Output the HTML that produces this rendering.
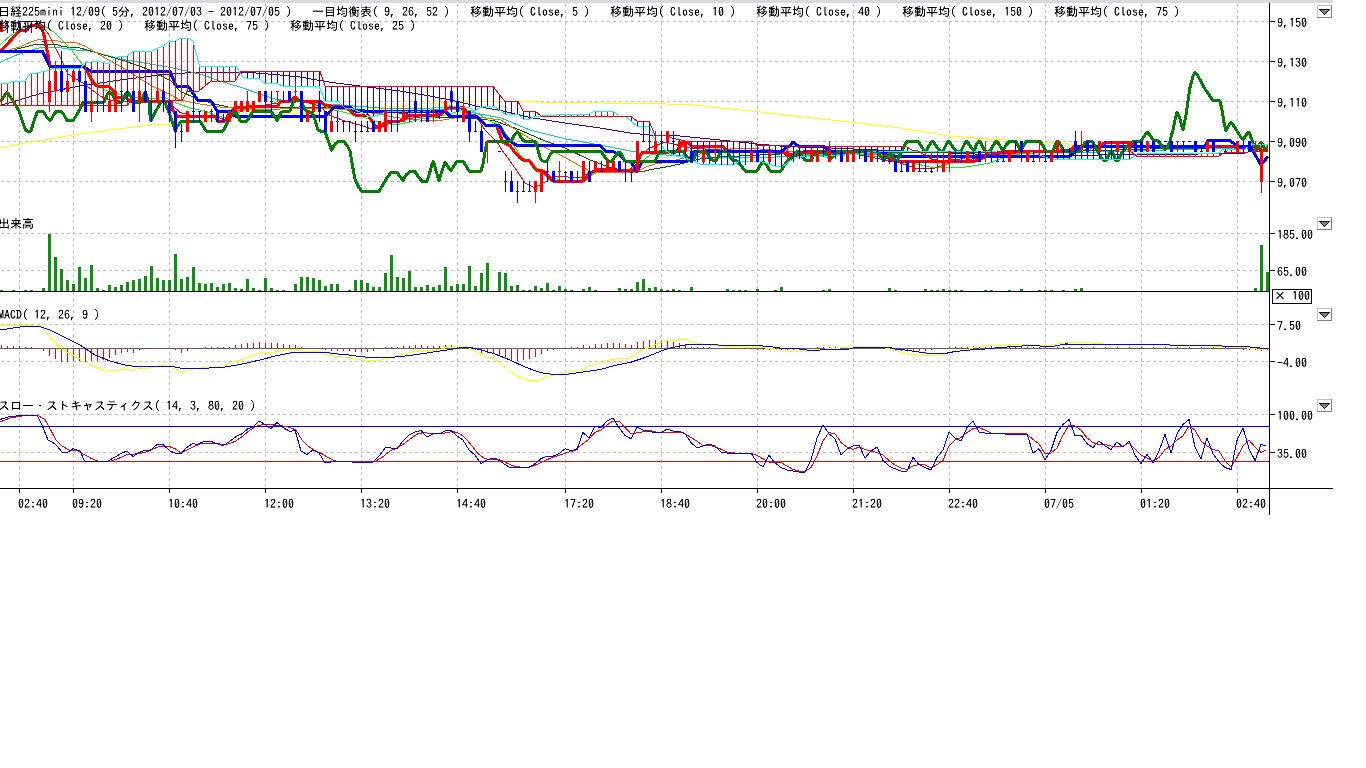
<!DOCTYPE html>
<html lang="ja"><head><meta charset="utf-8"><title>日経225mini チャート</title>
<style>html,body{margin:0;padding:0;background:#fff;overflow:hidden}svg{display:block}</style>
</head><body>
<svg width="1366" height="768" viewBox="0 0 1366 768" shape-rendering="crispEdges">
<defs><filter id="crisp" x="0" y="0" width="100%" height="100%" filterUnits="userSpaceOnUse" color-interpolation-filters="sRGB"><feComponentTransfer><feFuncA type="linear" slope="1.45" intercept="-0.12"/></feComponentTransfer></filter></defs>
<rect x="0" y="0" width="1366" height="768" fill="#ffffff"/>
<rect x="0" y="0" width="1333" height="3" fill="#d8dade"/>
<rect x="15" y="0" width="81" height="1" fill="#fafafa"/>
<g>
<line x1="1" y1="21.5" x2="1269" y2="21.5" stroke="#c0c0c0" stroke-width="1" stroke-dasharray="3,3"/>
<line x1="1" y1="61.5" x2="1269" y2="61.5" stroke="#c0c0c0" stroke-width="1" stroke-dasharray="3,3"/>
<line x1="1" y1="101.5" x2="1269" y2="101.5" stroke="#c0c0c0" stroke-width="1" stroke-dasharray="3,3"/>
<line x1="1" y1="141.5" x2="1269" y2="141.5" stroke="#c0c0c0" stroke-width="1" stroke-dasharray="3,3"/>
<line x1="1" y1="181.5" x2="1269" y2="181.5" stroke="#c0c0c0" stroke-width="1" stroke-dasharray="3,3"/>
<line x1="1" y1="233.5" x2="1269" y2="233.5" stroke="#c0c0c0" stroke-width="1" stroke-dasharray="3,3"/>
<line x1="1" y1="270.5" x2="1269" y2="270.5" stroke="#c0c0c0" stroke-width="1" stroke-dasharray="3,3"/>
<line x1="1" y1="324.5" x2="1269" y2="324.5" stroke="#c0c0c0" stroke-width="1" stroke-dasharray="3,3"/>
<line x1="1" y1="361.5" x2="1269" y2="361.5" stroke="#c0c0c0" stroke-width="1" stroke-dasharray="3,3"/>
<line x1="1" y1="414.5" x2="1269" y2="414.5" stroke="#c0c0c0" stroke-width="1" stroke-dasharray="3,3"/>
<line x1="1" y1="452.5" x2="1269" y2="452.5" stroke="#c0c0c0" stroke-width="1" stroke-dasharray="3,3"/>
<line x1="19.5" y1="4" x2="19.5" y2="488" stroke="#c0c0c0" stroke-width="1" stroke-dasharray="3,3"/>
<line x1="73.5" y1="4" x2="73.5" y2="488" stroke="#c0c0c0" stroke-width="1" stroke-dasharray="3,3"/>
<line x1="169.5" y1="4" x2="169.5" y2="488" stroke="#c0c0c0" stroke-width="1" stroke-dasharray="3,3"/>
<line x1="265.5" y1="4" x2="265.5" y2="488" stroke="#c0c0c0" stroke-width="1" stroke-dasharray="3,3"/>
<line x1="361.5" y1="4" x2="361.5" y2="488" stroke="#c0c0c0" stroke-width="1" stroke-dasharray="3,3"/>
<line x1="457.5" y1="4" x2="457.5" y2="488" stroke="#c0c0c0" stroke-width="1" stroke-dasharray="3,3"/>
<line x1="565.5" y1="4" x2="565.5" y2="488" stroke="#c0c0c0" stroke-width="1" stroke-dasharray="3,3"/>
<line x1="661.5" y1="4" x2="661.5" y2="488" stroke="#c0c0c0" stroke-width="1" stroke-dasharray="3,3"/>
<line x1="757.5" y1="4" x2="757.5" y2="488" stroke="#c0c0c0" stroke-width="1" stroke-dasharray="3,3"/>
<line x1="853.5" y1="4" x2="853.5" y2="488" stroke="#c0c0c0" stroke-width="1" stroke-dasharray="3,3"/>
<line x1="949.5" y1="4" x2="949.5" y2="488" stroke="#c0c0c0" stroke-width="1" stroke-dasharray="3,3"/>
<line x1="1045.5" y1="4" x2="1045.5" y2="488" stroke="#c0c0c0" stroke-width="1" stroke-dasharray="3,3"/>
<line x1="1141.5" y1="4" x2="1141.5" y2="488" stroke="#c0c0c0" stroke-width="1" stroke-dasharray="3,3"/>
<line x1="1237.5" y1="4" x2="1237.5" y2="488" stroke="#c0c0c0" stroke-width="1" stroke-dasharray="3,3"/>
</g>
<g id="main">
<polyline points="0,147.5 73,135 110,130 150,125 171,124 200,122 230,119 260,116 290,113.75 320,111 336,110 360,109 380,108 400,106 420,104 440,103 460,102 480,101 501,101 555,102.5 650,103.5 666,104 690,104.5 720,108 757,111.5 790,115.6 820,118.75 853,122.5 900,128 949,136 996,139.75 1005,140 1010,142 1045,142.5 1060,143.75 1100,145 1150,147 1200,148 1268,149" fill="none" stroke="#ffff00" stroke-width="1" />
<polyline points="0,105.6 40,93.75 80,86 120,80 160,75 185,73 210,72.25 250,72.5 280,75 300,77 320,80.6 336,83 360,86 400,91 430,96 460,102 480,107 501,110.6 530,117.5 565,123 600,128 630,133 650,135 666,135.5 680,136 700,138 720,140 740,142 757,144 780,146 800,147 831,148 900,151 1000,155 1100,155 1200,154 1246,153" fill="none" stroke="#4b0082" stroke-width="1" />
<polyline points="0,62.5 15,55.5 25,52.3 33,49.7 40,47.6 60,47.6 66,48.6 72,49.7 90,51 120,59 150,64 171,67.5 200,74 220,81 240,87 260,94 275,99 285,100.6 300,102 340,105 380,108 430,109 460,110 480,114 501,118 530,130 565,138.75 600,145 630,151 650,153.75 666,155 700,157 750,158 800,156 850,154 900,153 1000,153 1100,152 1200,149 1268,147" fill="none" stroke="#00ced1" stroke-width="1" />
<polyline points="15,49.4 25,47 34,44.7 58,45 63,46.5 72,47.6 80,48 100,53.75 125,61 150,70 171,81 180,91 195,98 215,104 230,107.5 260,107.75 300,107 336,108 380,111 440,117.5 455,117.5 480,119 495,121 520,130 545,141 565,148 590,160 610,167.5 625,171 640,172 655,168.75 666,167 680,164 700,159 720,157 760,155 800,153 850,152 950,153 1050,152 1150,149 1268,147" fill="none" stroke="#006400" stroke-width="1" />
<polyline points="10,49.4 20,47 30,42.3 38,39.7 42,39 50,40.5 57,40.5 62,42.3 75,42.3 85,46 100,55 125,69 150,85 171,95 180,100 200,104 220,107 250,109 280,109 300,108 330,108 380,114 395,117.5 420,120 440,120.6 455,118 470,116 501,120 520,132.5 545,147.5 565,157.5 580,166 590,171 600,173 635,172.5 645,167.5 655,164 666,162.5 680,159 700,154 720,150 740,148 760,149 800,152 850,153 900,156 950,157 1000,155 1050,152 1100,148 1150,146 1268,147" fill="none" stroke="#ff6000" stroke-width="1" />
<polyline points="0,44.7 10,36 20,29 30,25 36,24 42,25 47,27.6 55,32.8 62,39.7 68,46 72,50 75,55 83,65 95,82.5 105,90 115,93 130,97 150,99 165,97.5 175,102.5 190,108 205,111 215,115 225,118 232,115 245,110 260,107 270,105 280,100 300,101 320,104 330,109 345,112.5 360,116 375,121 390,124 400,124 410,122 420,119 430,117.5 440,116 450,114 460,110.6 470,110 480,115 490,121 501,126 510,140 520,155 530,162.5 540,170 550,177 560,180 580,180 590,176 600,171 630,170 640,163 650,155 660,152 700,150 760,152 800,155 850,153 900,160 930,167 960,168 990,163 1010,155 1050,151 1100,146 1200,146 1268,148" fill="none" stroke="#00ff00" stroke-width="1" />
<polyline points="14,24 21,21 39,21 44,28 48,33.4 52,41 58,53 61,59 68,74 83,83 100,96 110,100 130,102 165,100 172,105 180,112.5 190,115 215,116 225,120 235,112 250,107 280,103 295,99 305,102 320,106 330,115.6 345,121 360,125 370,128.5 380,128.5 385,125 400,120 420,117 440,113 450,106 460,108 470,115 476,116 485,130 497,142 502,150 510,161 517,171 525,183 535,188 545,182 555,176 580,178 590,172 600,168 630,170 640,155 650,148 665,142 690,148 750,152 800,154 850,153 900,163 915,168 935,168 950,163 1000,154 1050,151 1100,146 1200,146 1268,150" fill="none" stroke="#ff0000" stroke-width="1" />
<polyline points="0,50.5 2,49.7 19,31.3 21,30 27,30 30,26.5 33,25.5 38,25.5 41,28 43,31.8 44.5,37 46,45.5 47.5,52.8 50,66 83,66 86,69 90,77 95,85 98,86.5 109,86.5 114,92 116,97 125,97 130,101 171,101 172.5,110 177.5,116 215,116 217.5,121 225,121 230,112 235,108 255,106.5 277,106.5 281,101 290,101 295,97 300,101 320,101 325,105.6 346,107 355,115 368,115 375,126 382,126 386,121 400,121 404,119 408,115 440,115 445,111 448,107 464,107 468,115 476,116 486,125.6 497,126 498,130 503,142.5 510,145.6 515,152.5 520,158 524,160.6 530,161 534,167.5 537,170.6 543,171 548,176 553,181 583,181 588,176 592,172.5 596,170.6 633,170.6 637,165 640,156 643,152 676,152 680,146 684,142 688,143 692,146 722,146 727,150 731,151 782,151 787,155 790,156 797,155 805,151 880,151 890,159 895,161 975,161 980,159 1000,152.5 1005,151 1070,151 1075,146 1100,146 1105,142.5 1130,142 1135,146 1255,146 1261,150 1268,150" fill="none" stroke="#ff0000" stroke-width="3" stroke-linejoin="round"/>
<polyline points="0,51.5 42.5,51.5 50,66.25 83,66.25 91,71.5 170,71.5 176,86 188,86 198,100.6 211,101 217,111 230,111 235,116 325,116 335,107 350,107 355,111 445,111 450,116 476,116 486,125.6 500,126 504,135 510,141 517,145.6 600,145.6 606,151.5 613,151.5 620,155 625,161 631,162 637,172 642,162 685,161.5 690,159 695,151 782,151 787,147 790,146 793,142 798,146 823,146 828,150 831,151 880,151 890,155 895,156 1070,156 1075,151 1080,146 1205,146 1208,140.6 1230,140.6 1237,146 1250,146 1253,151 1261,165 1268,156.5" fill="none" stroke="#0000ff" stroke-width="3" stroke-linejoin="round"/>
<polyline points="0,102 7,92 14,102.5 19,111 25,129 27,131 31,131 34,121 37,112.5 39,111 43,111 46,116 49,120 51,120 54,114 57,111 61,111 64,115 67,120.6 73,120.6 76,116 80,109 83,102.5 104,102 107,95 109,92 113,95 116,102 122,102 125,95 128,92 131,97 134,102 141,102 143,97 145,92 147,97 149,103 150,115 151,120.6 155,112.5 160,103.75 163,101 166,105 170,115 175,130 180,122.5 182,121 200,121 206,131 223,131 229,120 233,112.5 236,112 240,121 247,121 252,112.5 255,111 271,111 277,120.6 281,112.5 284,111 290,111 293,102.5 297,100.6 301,101 305,110 313,113.75 318,130 322,131.5 325,131.8 328,140 331.5,150 335,144 338,141.5 344,141.5 347,145.3 350,150.7 352,163 355,179 358,186 362,191.4 379,191.4 383,184.6 387,177.8 391,172.4 397,172.4 400,176.5 403,180.5 406,175 410,171.7 415,171.7 418,176.5 422,181.2 427,181.2 429,175 432,164.3 433.5,161.6 436,171 439,180.5 442,171 445,162 448,167 451,170.4 454,165.6 457,161.6 463,161.6 466,165.6 469,171 481,171 483,164.3 485,152 487,142.6 488,141.5 511,141 515,134 518,132 522,139 524,141 535,141 538,150 541,160 543,161 547,161 550,155 553,151 601,151 605,157.5 608,161 612,161 616,155 619,152 622,155 625,161 655,161 658,155 661,151 683,151 688,159 690,161 693,161 697,151 705,151 712,160 716,161 721,151 727,151 732,160 737,161 740,164 745,171 757,171 761,164 763,162 766,164 770,171 781,171 785,164 790,159 795,154 798,151 801,155 805,160 810,161 815,154 818,151 822,151 826,154 830,159 833,156 838,151 875,151 878,152.5 884,160 888,155 890,152.5 894,159 897,161 901,152.5 905,144 908,141 918,141 924,150.6 926,151 931,142.5 933,141 936,146 940,151 943,151 947,143 949,141 952,146 956,151 961,151 965,143 967,141 971,147.5 974,151 977,143 980,141 984,150 986,151 990,151 994,144 997,141 1000,146 1003,151 1006,145 1010,141 1016,141 1019,147.5 1021,151 1025,143 1027,141 1040,141 1044,147.5 1046,151 1053,151 1056,143 1058,141 1062,147.5 1064,151 1080,151 1085,142.5 1088,141 1092,141 1097,150 1100,156 1104,160.6 1106,161 1110,152.5 1112,151 1116,160.6 1118,161 1122,152.5 1125,149 1130,143 1135,141 1141,141 1145,135 1147,132 1150,135 1153,140 1158,141 1162,146 1165,150 1168,146 1170,141 1173,130 1175,120 1177,112 1180,119 1183,130 1186,115 1188,101 1190,87.5 1193,76 1195,72 1198,76 1205,89 1213,100.6 1220,101 1222,110 1224,122.5 1226,130.6 1229,125 1231,122 1235,127.5 1240,136 1243,140 1246,135 1249,132 1252,140 1254,146 1257,150 1259,145 1261,142 1264,147.5 1266,150" fill="none" stroke="#008000" stroke-width="3" stroke-linejoin="round"/>
<line x1="1.5" y1="83.5" x2="1.5" y2="105.6" stroke="#ff0000"/>
<line x1="7.5" y1="83.5" x2="7.5" y2="105.6" stroke="#ff0000"/>
<line x1="13.5" y1="81" x2="13.5" y2="105.6" stroke="#ff0000"/>
<line x1="19.5" y1="81" x2="19.5" y2="105.6" stroke="#ff0000"/>
<line x1="25.5" y1="80.3333" x2="25.5" y2="105.6" stroke="#ff0000"/>
<line x1="31.5" y1="73" x2="31.5" y2="105.6" stroke="#ff0000"/>
<line x1="37.5" y1="72.8846" x2="37.5" y2="105.6" stroke="#ff0000"/>
<line x1="43.5" y1="71.5" x2="43.5" y2="105.6" stroke="#ff0000"/>
<line x1="49.5" y1="70.1154" x2="49.5" y2="105.6" stroke="#ff0000"/>
<line x1="55.5" y1="68" x2="55.5" y2="105.6" stroke="#ff0000"/>
<line x1="61.5" y1="68" x2="61.5" y2="105.6" stroke="#ff0000"/>
<line x1="67.5" y1="68.1667" x2="67.5" y2="105.6" stroke="#ff0000"/>
<line x1="73.5" y1="68.5667" x2="73.5" y2="105.6" stroke="#ff0000"/>
<line x1="79.5" y1="68.9667" x2="79.5" y2="105.6" stroke="#ff0000"/>
<line x1="85.5" y1="62.9167" x2="85.5" y2="105.6" stroke="#ff0000"/>
<line x1="91.5" y1="61.9167" x2="91.5" y2="105.6" stroke="#ff0000"/>
<line x1="97.5" y1="61.125" x2="97.5" y2="105.6" stroke="#ff0000"/>
<line x1="103.5" y1="62.625" x2="103.5" y2="105.6" stroke="#ff0000"/>
<line x1="109.5" y1="63" x2="109.5" y2="105.6" stroke="#ff0000"/>
<line x1="115.5" y1="57.8571" x2="115.5" y2="105.6" stroke="#ff0000"/>
<line x1="121.5" y1="56.1429" x2="121.5" y2="105.6" stroke="#ff0000"/>
<line x1="127.5" y1="55.6333" x2="127.5" y2="105.025" stroke="#ff0000"/>
<line x1="133.5" y1="51.6" x2="133.5" y2="100.98" stroke="#ff0000"/>
<line x1="139.5" y1="51.6" x2="139.5" y2="100.933" stroke="#ff0000"/>
<line x1="145.5" y1="51.6" x2="145.5" y2="100.886" stroke="#ff0000"/>
<line x1="151.5" y1="51.3333" x2="151.5" y2="100.839" stroke="#ff0000"/>
<line x1="157.5" y1="48.2333" x2="157.5" y2="100.792" stroke="#ff0000"/>
<line x1="163.5" y1="45.9846" x2="163.5" y2="100.745" stroke="#ff0000"/>
<line x1="169.5" y1="41" x2="169.5" y2="100.698" stroke="#ff0000"/>
<line x1="175.5" y1="40.75" x2="175.5" y2="100.651" stroke="#ff0000"/>
<line x1="181.5" y1="38" x2="181.5" y2="100.604" stroke="#ff0000"/>
<line x1="187.5" y1="38" x2="187.5" y2="91" stroke="#ff0000"/>
<line x1="193.5" y1="42.9231" x2="193.5" y2="91" stroke="#ff0000"/>
<line x1="199.5" y1="66" x2="199.5" y2="90.5833" stroke="#ff0000"/>
<line x1="205.5" y1="66" x2="205.5" y2="85.5833" stroke="#ff0000"/>
<line x1="211.5" y1="66" x2="211.5" y2="81" stroke="#ff0000"/>
<line x1="217.5" y1="66" x2="217.5" y2="81" stroke="#ff0000"/>
<line x1="223.5" y1="66" x2="223.5" y2="81" stroke="#ff0000"/>
<line x1="229.5" y1="66" x2="229.5" y2="81" stroke="#ff0000"/>
<line x1="235.5" y1="66" x2="235.5" y2="80.2083" stroke="#ff0000"/>
<line x1="241.5" y1="71.5" x2="241.5" y2="75" stroke="#0000ff"/>
<line x1="247.5" y1="71.5" x2="247.5" y2="78.5" stroke="#0000ff"/>
<line x1="253.5" y1="71.5" x2="253.5" y2="78.5" stroke="#0000ff"/>
<line x1="259.5" y1="71.5" x2="259.5" y2="78.9167" stroke="#0000ff"/>
<line x1="265.5" y1="71.5" x2="265.5" y2="83.5" stroke="#0000ff"/>
<line x1="271.5" y1="71.5" x2="271.5" y2="83.5" stroke="#0000ff"/>
<line x1="277.5" y1="71.5" x2="277.5" y2="83.7083" stroke="#0000ff"/>
<line x1="283.5" y1="71.5" x2="283.5" y2="86" stroke="#0000ff"/>
<line x1="289.5" y1="71.5" x2="289.5" y2="86" stroke="#0000ff"/>
<line x1="295.5" y1="71.5" x2="295.5" y2="86" stroke="#0000ff"/>
<line x1="301.5" y1="71.5" x2="301.5" y2="86" stroke="#0000ff"/>
<line x1="307.5" y1="71.5" x2="307.5" y2="86" stroke="#0000ff"/>
<line x1="313.5" y1="71.5" x2="313.5" y2="86" stroke="#0000ff"/>
<line x1="319.5" y1="71.5" x2="319.5" y2="87.25" stroke="#0000ff"/>
<line x1="325.5" y1="86.0227" x2="325.5" y2="101" stroke="#0000ff"/>
<line x1="331.5" y1="86.2955" x2="331.5" y2="101" stroke="#0000ff"/>
<line x1="337.5" y1="86.5" x2="337.5" y2="101" stroke="#0000ff"/>
<line x1="343.5" y1="86.5" x2="343.5" y2="106.5" stroke="#0000ff"/>
<line x1="349.5" y1="86.5" x2="349.5" y2="108" stroke="#0000ff"/>
<line x1="355.5" y1="86.5" x2="355.5" y2="110.2" stroke="#0000ff"/>
<line x1="361.5" y1="86.5" x2="361.5" y2="112.6" stroke="#0000ff"/>
<line x1="367.5" y1="86.5" x2="367.5" y2="116.083" stroke="#0000ff"/>
<line x1="373.5" y1="86.5" x2="373.5" y2="116.107" stroke="#0000ff"/>
<line x1="379.5" y1="86.5" x2="379.5" y2="114.4" stroke="#0000ff"/>
<line x1="385.5" y1="86.5" x2="385.5" y2="112" stroke="#0000ff"/>
<line x1="391.5" y1="86.5" x2="391.5" y2="111" stroke="#0000ff"/>
<line x1="397.5" y1="86.5" x2="397.5" y2="111" stroke="#0000ff"/>
<line x1="403.5" y1="86.5" x2="403.5" y2="111" stroke="#0000ff"/>
<line x1="409.5" y1="86.5" x2="409.5" y2="111" stroke="#0000ff"/>
<line x1="415.5" y1="86.5" x2="415.5" y2="111" stroke="#0000ff"/>
<line x1="421.5" y1="86.5" x2="421.5" y2="111" stroke="#0000ff"/>
<line x1="427.5" y1="86.5" x2="427.5" y2="111" stroke="#0000ff"/>
<line x1="433.5" y1="86.5" x2="433.5" y2="107.5" stroke="#0000ff"/>
<line x1="439.5" y1="86.5" x2="439.5" y2="107.5" stroke="#0000ff"/>
<line x1="445.5" y1="86.5" x2="445.5" y2="107.31" stroke="#0000ff"/>
<line x1="451.5" y1="86.5" x2="451.5" y2="105.81" stroke="#0000ff"/>
<line x1="457.5" y1="86.5" x2="457.5" y2="106.65" stroke="#0000ff"/>
<line x1="463.5" y1="86.5" x2="463.5" y2="107.35" stroke="#0000ff"/>
<line x1="469.5" y1="86.5" x2="469.5" y2="107.95" stroke="#0000ff"/>
<line x1="475.5" y1="86.5" x2="475.5" y2="110.667" stroke="#0000ff"/>
<line x1="481.5" y1="86.5" x2="481.5" y2="107.5" stroke="#0000ff"/>
<line x1="487.5" y1="86.5" x2="487.5" y2="106" stroke="#0000ff"/>
<line x1="493.5" y1="86.5" x2="493.5" y2="106.7" stroke="#0000ff"/>
<line x1="499.5" y1="94.625" x2="499.5" y2="110.15" stroke="#0000ff"/>
<line x1="505.5" y1="101.5" x2="505.5" y2="114" stroke="#0000ff"/>
<line x1="511.5" y1="101.5" x2="511.5" y2="114" stroke="#0000ff"/>
<line x1="517.5" y1="101.5" x2="517.5" y2="114" stroke="#0000ff"/>
<line x1="523.5" y1="111" x2="523.5" y2="119" stroke="#0000ff"/>
<line x1="529.5" y1="111" x2="529.5" y2="119" stroke="#0000ff"/>
<line x1="535.5" y1="111.417" x2="535.5" y2="116" stroke="#0000ff"/>
<line x1="559.5" y1="114" x2="559.5" y2="116" stroke="#ff0000"/>
<line x1="565.5" y1="114" x2="565.5" y2="116" stroke="#ff0000"/>
<line x1="571.5" y1="114" x2="571.5" y2="116" stroke="#ff0000"/>
<line x1="577.5" y1="114" x2="577.5" y2="116" stroke="#ff0000"/>
<line x1="583.5" y1="114" x2="583.5" y2="116" stroke="#ff0000"/>
<line x1="589.5" y1="113.75" x2="589.5" y2="116" stroke="#ff0000"/>
<line x1="595.5" y1="111" x2="595.5" y2="116" stroke="#ff0000"/>
<line x1="601.5" y1="111" x2="601.5" y2="116" stroke="#ff0000"/>
<line x1="607.5" y1="111" x2="607.5" y2="116" stroke="#ff0000"/>
<line x1="613.5" y1="111.417" x2="613.5" y2="116" stroke="#ff0000"/>
<line x1="631.5" y1="117.071" x2="631.5" y2="121.417" stroke="#0000ff"/>
<line x1="637.5" y1="121" x2="637.5" y2="126" stroke="#0000ff"/>
<line x1="643.5" y1="121" x2="643.5" y2="126" stroke="#0000ff"/>
<line x1="649.5" y1="122.167" x2="649.5" y2="127.167" stroke="#0000ff"/>
<line x1="655.5" y1="135" x2="655.5" y2="140.417" stroke="#0000ff"/>
<line x1="661.5" y1="135" x2="661.5" y2="145.625" stroke="#0000ff"/>
<line x1="667.5" y1="135.75" x2="667.5" y2="151.786" stroke="#0000ff"/>
<line x1="673.5" y1="138.346" x2="673.5" y2="155.346" stroke="#0000ff"/>
<line x1="679.5" y1="139.731" x2="679.5" y2="156.731" stroke="#0000ff"/>
<line x1="685.5" y1="141" x2="685.5" y2="158.2" stroke="#0000ff"/>
<line x1="691.5" y1="141" x2="691.5" y2="160.6" stroke="#0000ff"/>
<line x1="697.5" y1="141" x2="697.5" y2="163" stroke="#0000ff"/>
<line x1="703.5" y1="141" x2="703.5" y2="164" stroke="#0000ff"/>
<line x1="709.5" y1="141" x2="709.5" y2="164" stroke="#0000ff"/>
<line x1="715.5" y1="141" x2="715.5" y2="164" stroke="#0000ff"/>
<line x1="721.5" y1="141" x2="721.5" y2="164" stroke="#0000ff"/>
<line x1="727.5" y1="141" x2="727.5" y2="164" stroke="#0000ff"/>
<line x1="733.5" y1="141" x2="733.5" y2="164" stroke="#0000ff"/>
<line x1="739.5" y1="141" x2="739.5" y2="161.3" stroke="#0000ff"/>
<line x1="745.5" y1="141" x2="745.5" y2="161" stroke="#0000ff"/>
<line x1="751.5" y1="141" x2="751.5" y2="161" stroke="#0000ff"/>
<line x1="757.5" y1="145.606" x2="757.5" y2="161.094" stroke="#0000ff"/>
<line x1="763.5" y1="145.679" x2="763.5" y2="162.219" stroke="#0000ff"/>
<line x1="769.5" y1="145.752" x2="769.5" y2="164.075" stroke="#0000ff"/>
<line x1="775.5" y1="145.825" x2="775.5" y2="166" stroke="#0000ff"/>
<line x1="781.5" y1="145.898" x2="781.5" y2="166" stroke="#0000ff"/>
<line x1="787.5" y1="145.971" x2="787.5" y2="162.786" stroke="#0000ff"/>
<line x1="793.5" y1="146.044" x2="793.5" y2="159.25" stroke="#0000ff"/>
<line x1="799.5" y1="146.117" x2="799.5" y2="156.25" stroke="#0000ff"/>
<line x1="805.5" y1="146.19" x2="805.5" y2="156" stroke="#0000ff"/>
<line x1="811.5" y1="146.263" x2="811.5" y2="156" stroke="#0000ff"/>
<line x1="817.5" y1="146.336" x2="817.5" y2="156" stroke="#0000ff"/>
<line x1="823.5" y1="146.409" x2="823.5" y2="156" stroke="#0000ff"/>
<line x1="829.5" y1="146.482" x2="829.5" y2="156" stroke="#0000ff"/>
<line x1="835.5" y1="146.47" x2="835.5" y2="155.69" stroke="#0000ff"/>
<line x1="841.5" y1="146.429" x2="841.5" y2="155.276" stroke="#0000ff"/>
<line x1="847.5" y1="146.389" x2="847.5" y2="154.862" stroke="#0000ff"/>
<line x1="853.5" y1="146.348" x2="853.5" y2="154.448" stroke="#0000ff"/>
<line x1="859.5" y1="146.307" x2="859.5" y2="154.034" stroke="#0000ff"/>
<line x1="865.5" y1="146.267" x2="865.5" y2="153.175" stroke="#0000ff"/>
<line x1="871.5" y1="146.226" x2="871.5" y2="152.275" stroke="#0000ff"/>
<line x1="877.5" y1="146.186" x2="877.5" y2="151.375" stroke="#0000ff"/>
<line x1="883.5" y1="146.145" x2="883.5" y2="151" stroke="#0000ff"/>
<line x1="889.5" y1="146.105" x2="889.5" y2="151" stroke="#0000ff"/>
<line x1="895.5" y1="146.064" x2="895.5" y2="151" stroke="#0000ff"/>
<line x1="901.5" y1="146.024" x2="901.5" y2="151" stroke="#0000ff"/>
<line x1="907.5" y1="147.429" x2="907.5" y2="151" stroke="#0000ff"/>
<line x1="925.5" y1="151" x2="925.5" y2="155.333" stroke="#ff0000"/>
<line x1="931.5" y1="151" x2="931.5" y2="159.083" stroke="#ff0000"/>
<line x1="937.5" y1="151" x2="937.5" y2="160.083" stroke="#ff0000"/>
<line x1="943.5" y1="151" x2="943.5" y2="160.941" stroke="#ff0000"/>
<line x1="949.5" y1="151" x2="949.5" y2="160.235" stroke="#ff0000"/>
<line x1="955.5" y1="151" x2="955.5" y2="159.529" stroke="#ff0000"/>
<line x1="961.5" y1="151" x2="961.5" y2="158.7" stroke="#ff0000"/>
<line x1="967.5" y1="151" x2="967.5" y2="157.5" stroke="#ff0000"/>
<line x1="973.5" y1="151" x2="973.5" y2="156.3" stroke="#ff0000"/>
<line x1="979.5" y1="151" x2="979.5" y2="155.1" stroke="#ff0000"/>
<line x1="985.5" y1="151" x2="985.5" y2="153.9" stroke="#ff0000"/>
<line x1="1033.5" y1="151.128" x2="1033.5" y2="153.167" stroke="#0000ff"/>
<line x1="1039.5" y1="151.061" x2="1039.5" y2="155.167" stroke="#0000ff"/>
<line x1="1045.5" y1="151" x2="1045.5" y2="157.2" stroke="#0000ff"/>
<line x1="1051.5" y1="151" x2="1051.5" y2="159" stroke="#0000ff"/>
<line x1="1057.5" y1="151" x2="1057.5" y2="159" stroke="#0000ff"/>
<line x1="1063.5" y1="151" x2="1063.5" y2="159" stroke="#0000ff"/>
<line x1="1069.5" y1="151" x2="1069.5" y2="159" stroke="#0000ff"/>
<line x1="1075.5" y1="151" x2="1075.5" y2="159" stroke="#0000ff"/>
<line x1="1081.5" y1="151" x2="1081.5" y2="159" stroke="#0000ff"/>
<line x1="1087.5" y1="151" x2="1087.5" y2="159" stroke="#0000ff"/>
<line x1="1093.5" y1="151" x2="1093.5" y2="159" stroke="#0000ff"/>
<line x1="1099.5" y1="151" x2="1099.5" y2="159" stroke="#0000ff"/>
<line x1="1105.5" y1="151" x2="1105.5" y2="159" stroke="#0000ff"/>
<line x1="1111.5" y1="151" x2="1111.5" y2="159" stroke="#0000ff"/>
<line x1="1117.5" y1="151" x2="1117.5" y2="159" stroke="#0000ff"/>
<line x1="1123.5" y1="151" x2="1123.5" y2="159" stroke="#0000ff"/>
<line x1="1129.5" y1="151" x2="1129.5" y2="159" stroke="#0000ff"/>
<line x1="1141.5" y1="153.6" x2="1141.5" y2="156.4" stroke="#ff0000"/>
<line x1="1147.5" y1="153.6" x2="1147.5" y2="156.4" stroke="#ff0000"/>
<line x1="1153.5" y1="153.6" x2="1153.5" y2="156.4" stroke="#ff0000"/>
<line x1="1159.5" y1="153.6" x2="1159.5" y2="156.4" stroke="#ff0000"/>
<line x1="1165.5" y1="153.6" x2="1165.5" y2="156.4" stroke="#ff0000"/>
<line x1="1171.5" y1="153.6" x2="1171.5" y2="156.4" stroke="#ff0000"/>
<line x1="1177.5" y1="153.6" x2="1177.5" y2="156.4" stroke="#ff0000"/>
<line x1="1183.5" y1="153.6" x2="1183.5" y2="156.4" stroke="#ff0000"/>
<line x1="1189.5" y1="153.6" x2="1189.5" y2="156.4" stroke="#ff0000"/>
<line x1="1195.5" y1="153.6" x2="1195.5" y2="156.4" stroke="#ff0000"/>
<line x1="1201.5" y1="153.6" x2="1201.5" y2="156.4" stroke="#ff0000"/>
<line x1="1207.5" y1="153.6" x2="1207.5" y2="156.4" stroke="#ff0000"/>
<line x1="1213.5" y1="153.6" x2="1213.5" y2="156.4" stroke="#ff0000"/>
<line x1="1219.5" y1="152.25" x2="1219.5" y2="155.564" stroke="#ff0000"/>
<line x1="1225.5" y1="149.848" x2="1225.5" y2="152.5" stroke="#ff0000"/>
<line x1="1231.5" y1="149.587" x2="1231.5" y2="152.5" stroke="#ff0000"/>
<line x1="1237.5" y1="149.326" x2="1237.5" y2="152.5" stroke="#ff0000"/>
<line x1="1243.5" y1="149.065" x2="1243.5" y2="152.5" stroke="#ff0000"/>
<line x1="1249.5" y1="146.3" x2="1249.5" y2="151.75" stroke="#ff0000"/>
<line x1="1255.5" y1="144.5" x2="1255.5" y2="151" stroke="#ff0000"/>
<line x1="1261.5" y1="144.5" x2="1261.5" y2="151" stroke="#ff0000"/>
<line x1="1267.5" y1="144.5" x2="1267.5" y2="151" stroke="#ff0000"/>
<polyline points="0,83.5 8,83.5 13,81 25,81 31,73 37,73 50,70 55,68 65,68 80,69 85,63 97,61 105,63 110,63 115,58 122,56 127,56 133,51.6 151,51.6 157,48.4 163,46.4 169.5,41 175,41 181,38 188,38 193,41 199.5,66 236,66 240,73 243,77 247,78.5 259,78.5 265,83.5 277,83.5 283,86 319,86 325,101 338,101 345,108 350,108 355,110 365,114 368,116.5 375,116 378,115 388,111 430,111 433,107.5 445,107.5 450,105.6 460,107 470,108 475,111 478,109 485,106 490,106 495,107 505,114 518,114 523,119 530,119 535,116 541,116 555,115.6 559,114 589,114 595,111 613,111 619,116 625,116 631,121 637,126 649,126 655,140 661,145 665,150 672,155 685,158 700,164 735,164 740,161 757,161 765,162.5 775,166 783,166 790,161 800,156 831,156 860,154 880,151 925,151 996,151 1030,152 1045,157 1050,159 1130,159 1134,156.5 1137,154 1140,153.6 1218,153.6 1222,150 1245,149 1250,146 1253,144.5 1268,144.5" fill="none" stroke="#00ffff" stroke-width="1" />
<polyline points="0,105.6 127,105.6 131,101 182,100.6 187,91 199,91 211,81 235,81 241,71.5 320,71.5 325,86 336,86.5 493.75,86.5 495,89 505,101.5 518,101.5 523,111 535,111 541,116 630,116 637,121 649,121 655,135 666,135 672,138 685,141 752,141 757,145.6 831,146.5 905,146 912,150 918,151 925,155 931,159 943,161 960,159 975,156 990,153 1000,151.5 1045,151 1130,151 1134,154 1137,156.4 1218,156.4 1225,152.5 1246,152.5 1253,151 1268,151" fill="none" stroke="#ff0000" stroke-width="1" />
<line x1="1.5" y1="21" x2="1.5" y2="32" stroke="#ff0000"/>
<rect x="0" y="21" width="3" height="11" fill="#ff0000"/>
<line x1="7.5" y1="22" x2="7.5" y2="33" stroke="#0000ff"/>
<rect x="6" y="22" width="3" height="1" fill="#0000ff"/>
<line x1="13.5" y1="22" x2="13.5" y2="33" stroke="#0000ff"/>
<rect x="12" y="22" width="3" height="1" fill="#0000ff"/>
<line x1="19.5" y1="21" x2="19.5" y2="33" stroke="#0000ff"/>
<rect x="18" y="21" width="3" height="1" fill="#0000ff"/>
<line x1="25.5" y1="21" x2="25.5" y2="33" stroke="#0000ff"/>
<rect x="24" y="21" width="3" height="1" fill="#0000ff"/>
<line x1="31.5" y1="21" x2="31.5" y2="33" stroke="#0000ff"/>
<rect x="30" y="21" width="3" height="1" fill="#0000ff"/>
<line x1="37.5" y1="21" x2="37.5" y2="23" stroke="#0000ff"/>
<rect x="36" y="21" width="3" height="1" fill="#0000ff"/>
<line x1="43.5" y1="41" x2="43.5" y2="42" stroke="#0000ff"/>
<rect x="42" y="41" width="3" height="1" fill="#0000ff"/>
<line x1="49.5" y1="61" x2="49.5" y2="112" stroke="#ff0000"/>
<rect x="48" y="81" width="3" height="21" fill="#ff0000"/>
<line x1="55.5" y1="61" x2="55.5" y2="102" stroke="#ff0000"/>
<rect x="54" y="71" width="3" height="20" fill="#ff0000"/>
<line x1="61.5" y1="51" x2="61.5" y2="102" stroke="#0000ff"/>
<rect x="60" y="71" width="3" height="21" fill="#0000ff"/>
<line x1="67.5" y1="69" x2="67.5" y2="96" stroke="#ff0000"/>
<rect x="66" y="81" width="3" height="11" fill="#ff0000"/>
<line x1="73.5" y1="71" x2="73.5" y2="82" stroke="#ff0000"/>
<rect x="72" y="71" width="3" height="11" fill="#ff0000"/>
<line x1="79.5" y1="71" x2="79.5" y2="92" stroke="#0000ff"/>
<rect x="78" y="71" width="3" height="11" fill="#0000ff"/>
<line x1="85.5" y1="81" x2="85.5" y2="112" stroke="#0000ff"/>
<rect x="84" y="81" width="3" height="31" fill="#0000ff"/>
<line x1="91.5" y1="100" x2="91.5" y2="122" stroke="#ff0000"/>
<rect x="90" y="101" width="3" height="11" fill="#ff0000"/>
<line x1="97.5" y1="101" x2="97.5" y2="112" stroke="#0000ff"/>
<rect x="96" y="101" width="3" height="1" fill="#0000ff"/>
<line x1="103.5" y1="101" x2="103.5" y2="112" stroke="#0000ff"/>
<rect x="102" y="101" width="3" height="1" fill="#0000ff"/>
<line x1="109.5" y1="91" x2="109.5" y2="112" stroke="#ff0000"/>
<rect x="108" y="101" width="3" height="11" fill="#ff0000"/>
<line x1="115.5" y1="91" x2="115.5" y2="112" stroke="#ff0000"/>
<rect x="114" y="91" width="3" height="21" fill="#ff0000"/>
<line x1="121.5" y1="91" x2="121.5" y2="112" stroke="#0000ff"/>
<rect x="120" y="91" width="3" height="1" fill="#0000ff"/>
<line x1="127.5" y1="81" x2="127.5" y2="102" stroke="#0000ff"/>
<rect x="126" y="91" width="3" height="1" fill="#0000ff"/>
<line x1="133.5" y1="91" x2="133.5" y2="112" stroke="#0000ff"/>
<rect x="132" y="91" width="3" height="21" fill="#0000ff"/>
<line x1="139.5" y1="91" x2="139.5" y2="122" stroke="#ff0000"/>
<rect x="138" y="91" width="3" height="11" fill="#ff0000"/>
<line x1="145.5" y1="81" x2="145.5" y2="102" stroke="#0000ff"/>
<rect x="144" y="91" width="3" height="11" fill="#0000ff"/>
<line x1="151.5" y1="101" x2="151.5" y2="122" stroke="#0000ff"/>
<rect x="150" y="101" width="3" height="1" fill="#0000ff"/>
<line x1="157.5" y1="91" x2="157.5" y2="102" stroke="#ff0000"/>
<rect x="156" y="91" width="3" height="11" fill="#ff0000"/>
<line x1="163.5" y1="81" x2="163.5" y2="112" stroke="#0000ff"/>
<rect x="162" y="91" width="3" height="11" fill="#0000ff"/>
<line x1="169.5" y1="101" x2="169.5" y2="122" stroke="#0000ff"/>
<rect x="168" y="101" width="3" height="12" fill="#0000ff"/>
<line x1="175.5" y1="111" x2="175.5" y2="148" stroke="#0000ff"/>
<rect x="174" y="111" width="3" height="21" fill="#0000ff"/>
<line x1="181.5" y1="124" x2="181.5" y2="142" stroke="#0000ff"/>
<rect x="180" y="131" width="3" height="1" fill="#0000ff"/>
<line x1="187.5" y1="111" x2="187.5" y2="132" stroke="#ff0000"/>
<rect x="186" y="111" width="3" height="21" fill="#ff0000"/>
<line x1="193.5" y1="90" x2="193.5" y2="123" stroke="#0000ff"/>
<rect x="192" y="111" width="3" height="1" fill="#0000ff"/>
<line x1="199.5" y1="111" x2="199.5" y2="122" stroke="#0000ff"/>
<rect x="198" y="111" width="3" height="1" fill="#0000ff"/>
<line x1="205.5" y1="111" x2="205.5" y2="122" stroke="#ff0000"/>
<rect x="204" y="111" width="3" height="11" fill="#ff0000"/>
<line x1="211.5" y1="109" x2="211.5" y2="122" stroke="#0000ff"/>
<rect x="210" y="111" width="3" height="1" fill="#0000ff"/>
<line x1="217.5" y1="111" x2="217.5" y2="122" stroke="#0000ff"/>
<rect x="216" y="111" width="3" height="11" fill="#0000ff"/>
<line x1="223.5" y1="114" x2="223.5" y2="122" stroke="#0000ff"/>
<rect x="222" y="121" width="3" height="1" fill="#0000ff"/>
<line x1="229.5" y1="111" x2="229.5" y2="122" stroke="#ff0000"/>
<rect x="228" y="111" width="3" height="11" fill="#ff0000"/>
<line x1="235.5" y1="101" x2="235.5" y2="112" stroke="#ff0000"/>
<rect x="234" y="101" width="3" height="11" fill="#ff0000"/>
<line x1="241.5" y1="101" x2="241.5" y2="112" stroke="#ff0000"/>
<rect x="240" y="101" width="3" height="11" fill="#ff0000"/>
<line x1="247.5" y1="91" x2="247.5" y2="112" stroke="#ff0000"/>
<rect x="246" y="101" width="3" height="11" fill="#ff0000"/>
<line x1="253.5" y1="101" x2="253.5" y2="112" stroke="#ff0000"/>
<rect x="252" y="101" width="3" height="11" fill="#ff0000"/>
<line x1="259.5" y1="91" x2="259.5" y2="102" stroke="#ff0000"/>
<rect x="258" y="91" width="3" height="11" fill="#ff0000"/>
<line x1="265.5" y1="91" x2="265.5" y2="112" stroke="#0000ff"/>
<rect x="264" y="91" width="3" height="11" fill="#0000ff"/>
<line x1="271.5" y1="91" x2="271.5" y2="112" stroke="#0000ff"/>
<rect x="270" y="101" width="3" height="1" fill="#0000ff"/>
<line x1="277.5" y1="91" x2="277.5" y2="101" stroke="#ff0000"/>
<rect x="276" y="91" width="3" height="1" fill="#ff0000"/>
<line x1="283.5" y1="91" x2="283.5" y2="102" stroke="#0000ff"/>
<rect x="282" y="101" width="3" height="1" fill="#0000ff"/>
<line x1="289.5" y1="91" x2="289.5" y2="102" stroke="#0000ff"/>
<rect x="288" y="91" width="3" height="11" fill="#0000ff"/>
<line x1="295.5" y1="81" x2="295.5" y2="102" stroke="#ff0000"/>
<rect x="294" y="91" width="3" height="1" fill="#ff0000"/>
<line x1="301.5" y1="91" x2="301.5" y2="122" stroke="#0000ff"/>
<rect x="300" y="91" width="3" height="31" fill="#0000ff"/>
<line x1="307.5" y1="111" x2="307.5" y2="122" stroke="#ff0000"/>
<rect x="306" y="111" width="3" height="11" fill="#ff0000"/>
<line x1="313.5" y1="101" x2="313.5" y2="112" stroke="#ff0000"/>
<rect x="312" y="101" width="3" height="11" fill="#ff0000"/>
<line x1="319.5" y1="91" x2="319.5" y2="122" stroke="#0000ff"/>
<rect x="318" y="101" width="3" height="11" fill="#0000ff"/>
<line x1="325.5" y1="111" x2="325.5" y2="132" stroke="#0000ff"/>
<rect x="324" y="111" width="3" height="21" fill="#0000ff"/>
<line x1="331.5" y1="111" x2="331.5" y2="132" stroke="#ff0000"/>
<rect x="330" y="121" width="3" height="11" fill="#ff0000"/>
<line x1="337.5" y1="111" x2="337.5" y2="132" stroke="#0000ff"/>
<rect x="336" y="121" width="3" height="1" fill="#0000ff"/>
<line x1="343.5" y1="121" x2="343.5" y2="132" stroke="#0000ff"/>
<rect x="342" y="121" width="3" height="1" fill="#0000ff"/>
<line x1="349.5" y1="121" x2="349.5" y2="132" stroke="#0000ff"/>
<rect x="348" y="121" width="3" height="1" fill="#0000ff"/>
<line x1="355.5" y1="121" x2="355.5" y2="142" stroke="#0000ff"/>
<rect x="354" y="131" width="3" height="1" fill="#0000ff"/>
<line x1="361.5" y1="121" x2="361.5" y2="132" stroke="#0000ff"/>
<rect x="360" y="131" width="3" height="1" fill="#0000ff"/>
<line x1="367.5" y1="121" x2="367.5" y2="132" stroke="#0000ff"/>
<rect x="366" y="131" width="3" height="1" fill="#0000ff"/>
<line x1="373.5" y1="121" x2="373.5" y2="132" stroke="#0000ff"/>
<rect x="372" y="121" width="3" height="11" fill="#0000ff"/>
<line x1="379.5" y1="121" x2="379.5" y2="132" stroke="#ff0000"/>
<rect x="378" y="121" width="3" height="11" fill="#ff0000"/>
<line x1="385.5" y1="101" x2="385.5" y2="132" stroke="#ff0000"/>
<rect x="384" y="111" width="3" height="21" fill="#ff0000"/>
<line x1="391.5" y1="111" x2="391.5" y2="132" stroke="#0000ff"/>
<rect x="390" y="121" width="3" height="1" fill="#0000ff"/>
<line x1="397.5" y1="111" x2="397.5" y2="132" stroke="#0000ff"/>
<rect x="396" y="121" width="3" height="1" fill="#0000ff"/>
<line x1="403.5" y1="101" x2="403.5" y2="122" stroke="#ff0000"/>
<rect x="402" y="111" width="3" height="11" fill="#ff0000"/>
<line x1="409.5" y1="101" x2="409.5" y2="122" stroke="#0000ff"/>
<rect x="408" y="111" width="3" height="1" fill="#0000ff"/>
<line x1="415.5" y1="101" x2="415.5" y2="122" stroke="#0000ff"/>
<rect x="414" y="101" width="3" height="11" fill="#0000ff"/>
<line x1="421.5" y1="101" x2="421.5" y2="122" stroke="#0000ff"/>
<rect x="420" y="111" width="3" height="1" fill="#0000ff"/>
<line x1="427.5" y1="111" x2="427.5" y2="122" stroke="#0000ff"/>
<rect x="426" y="111" width="3" height="11" fill="#0000ff"/>
<line x1="433.5" y1="101" x2="433.5" y2="122" stroke="#ff0000"/>
<rect x="432" y="111" width="3" height="1" fill="#ff0000"/>
<line x1="439.5" y1="105" x2="439.5" y2="119" stroke="#0000ff"/>
<rect x="438" y="111" width="3" height="1" fill="#0000ff"/>
<line x1="445.5" y1="90" x2="445.5" y2="112" stroke="#ff0000"/>
<rect x="444" y="101" width="3" height="11" fill="#ff0000"/>
<line x1="451.5" y1="88" x2="451.5" y2="112" stroke="#0000ff"/>
<rect x="450" y="91" width="3" height="11" fill="#0000ff"/>
<line x1="457.5" y1="101" x2="457.5" y2="122" stroke="#0000ff"/>
<rect x="456" y="101" width="3" height="11" fill="#0000ff"/>
<line x1="463.5" y1="101" x2="463.5" y2="122" stroke="#ff0000"/>
<rect x="462" y="111" width="3" height="11" fill="#ff0000"/>
<line x1="469.5" y1="111" x2="469.5" y2="142" stroke="#0000ff"/>
<rect x="468" y="111" width="3" height="21" fill="#0000ff"/>
<line x1="475.5" y1="121" x2="475.5" y2="132" stroke="#0000ff"/>
<rect x="474" y="131" width="3" height="1" fill="#0000ff"/>
<line x1="481.5" y1="126" x2="481.5" y2="152" stroke="#0000ff"/>
<rect x="480" y="131" width="3" height="21" fill="#0000ff"/>
<line x1="487.5" y1="141" x2="487.5" y2="163" stroke="#ff0000"/>
<rect x="486" y="141" width="3" height="1" fill="#ff0000"/>
<line x1="493.5" y1="141" x2="493.5" y2="142" stroke="#0000ff"/>
<rect x="492" y="141" width="3" height="1" fill="#0000ff"/>
<line x1="499.5" y1="151" x2="499.5" y2="152" stroke="#0000ff"/>
<rect x="498" y="151" width="3" height="1" fill="#0000ff"/>
<line x1="505.5" y1="171" x2="505.5" y2="192" stroke="#0000ff"/>
<rect x="504" y="181" width="3" height="1" fill="#0000ff"/>
<line x1="511.5" y1="171" x2="511.5" y2="192" stroke="#0000ff"/>
<rect x="510" y="181" width="3" height="11" fill="#0000ff"/>
<line x1="517.5" y1="181" x2="517.5" y2="203" stroke="#0000ff"/>
<rect x="516" y="191" width="3" height="1" fill="#0000ff"/>
<line x1="523.5" y1="181" x2="523.5" y2="192" stroke="#0000ff"/>
<rect x="522" y="191" width="3" height="1" fill="#0000ff"/>
<line x1="529.5" y1="181" x2="529.5" y2="192" stroke="#0000ff"/>
<rect x="528" y="191" width="3" height="1" fill="#0000ff"/>
<line x1="535.5" y1="181" x2="535.5" y2="203" stroke="#ff0000"/>
<rect x="534" y="181" width="3" height="11" fill="#ff0000"/>
<line x1="541.5" y1="171" x2="541.5" y2="192" stroke="#ff0000"/>
<rect x="540" y="171" width="3" height="21" fill="#ff0000"/>
<line x1="547.5" y1="161" x2="547.5" y2="182" stroke="#0000ff"/>
<rect x="546" y="171" width="3" height="1" fill="#0000ff"/>
<line x1="553.5" y1="171" x2="553.5" y2="182" stroke="#0000ff"/>
<rect x="552" y="171" width="3" height="11" fill="#0000ff"/>
<line x1="559.5" y1="161" x2="559.5" y2="182" stroke="#ff0000"/>
<rect x="558" y="171" width="3" height="1" fill="#ff0000"/>
<line x1="565.5" y1="171" x2="565.5" y2="182" stroke="#0000ff"/>
<rect x="564" y="172" width="3" height="1" fill="#0000ff"/>
<line x1="571.5" y1="171" x2="571.5" y2="182" stroke="#0000ff"/>
<rect x="570" y="171" width="3" height="11" fill="#0000ff"/>
<line x1="577.5" y1="171" x2="577.5" y2="182" stroke="#0000ff"/>
<rect x="576" y="181" width="3" height="1" fill="#0000ff"/>
<line x1="583.5" y1="161" x2="583.5" y2="182" stroke="#ff0000"/>
<rect x="582" y="161" width="3" height="21" fill="#ff0000"/>
<line x1="589.5" y1="161" x2="589.5" y2="182" stroke="#0000ff"/>
<rect x="588" y="171" width="3" height="11" fill="#0000ff"/>
<line x1="595.5" y1="161" x2="595.5" y2="172" stroke="#ff0000"/>
<rect x="594" y="161" width="3" height="11" fill="#ff0000"/>
<line x1="601.5" y1="161" x2="601.5" y2="172" stroke="#0000ff"/>
<rect x="600" y="171" width="3" height="1" fill="#0000ff"/>
<line x1="607.5" y1="161" x2="607.5" y2="172" stroke="#ff0000"/>
<rect x="606" y="161" width="3" height="11" fill="#ff0000"/>
<line x1="613.5" y1="161" x2="613.5" y2="172" stroke="#ff0000"/>
<rect x="612" y="161" width="3" height="11" fill="#ff0000"/>
<line x1="619.5" y1="161" x2="619.5" y2="172" stroke="#0000ff"/>
<rect x="618" y="161" width="3" height="11" fill="#0000ff"/>
<line x1="625.5" y1="161" x2="625.5" y2="182" stroke="#0000ff"/>
<rect x="624" y="171" width="3" height="1" fill="#0000ff"/>
<line x1="631.5" y1="171" x2="631.5" y2="182" stroke="#0000ff"/>
<rect x="630" y="172" width="3" height="1" fill="#0000ff"/>
<line x1="637.5" y1="141" x2="637.5" y2="172" stroke="#ff0000"/>
<rect x="636" y="141" width="3" height="31" fill="#ff0000"/>
<line x1="643.5" y1="121" x2="643.5" y2="142" stroke="#0000ff"/>
<rect x="642" y="141" width="3" height="1" fill="#0000ff"/>
<line x1="649.5" y1="123" x2="649.5" y2="153" stroke="#0000ff"/>
<rect x="648" y="141" width="3" height="1" fill="#0000ff"/>
<line x1="655.5" y1="131" x2="655.5" y2="152" stroke="#ff0000"/>
<rect x="654" y="141" width="3" height="11" fill="#ff0000"/>
<line x1="661.5" y1="131" x2="661.5" y2="153" stroke="#0000ff"/>
<rect x="660" y="141" width="3" height="1" fill="#0000ff"/>
<line x1="667.5" y1="131" x2="667.5" y2="142" stroke="#ff0000"/>
<rect x="666" y="131" width="3" height="11" fill="#ff0000"/>
<line x1="673.5" y1="131" x2="673.5" y2="154" stroke="#0000ff"/>
<rect x="672" y="141" width="3" height="1" fill="#0000ff"/>
<line x1="679.5" y1="141" x2="679.5" y2="152" stroke="#ff0000"/>
<rect x="678" y="141" width="3" height="11" fill="#ff0000"/>
<line x1="685.5" y1="141" x2="685.5" y2="152" stroke="#ff0000"/>
<rect x="684" y="141" width="3" height="11" fill="#ff0000"/>
<line x1="691.5" y1="141" x2="691.5" y2="162" stroke="#0000ff"/>
<rect x="690" y="151" width="3" height="11" fill="#0000ff"/>
<line x1="697.5" y1="141" x2="697.5" y2="162" stroke="#0000ff"/>
<rect x="696" y="151" width="3" height="1" fill="#0000ff"/>
<line x1="703.5" y1="151" x2="703.5" y2="162" stroke="#ff0000"/>
<rect x="702" y="151" width="3" height="11" fill="#ff0000"/>
<line x1="709.5" y1="141" x2="709.5" y2="162" stroke="#0000ff"/>
<rect x="708" y="151" width="3" height="1" fill="#0000ff"/>
<line x1="715.5" y1="142" x2="715.5" y2="162" stroke="#ff0000"/>
<rect x="714" y="151" width="3" height="1" fill="#ff0000"/>
<line x1="721.5" y1="141" x2="721.5" y2="165" stroke="#0000ff"/>
<rect x="720" y="151" width="3" height="1" fill="#0000ff"/>
<line x1="727.5" y1="141" x2="727.5" y2="165" stroke="#0000ff"/>
<rect x="726" y="151" width="3" height="1" fill="#0000ff"/>
<line x1="733.5" y1="141" x2="733.5" y2="165" stroke="#0000ff"/>
<rect x="732" y="151" width="3" height="1" fill="#0000ff"/>
<line x1="739.5" y1="141" x2="739.5" y2="165" stroke="#0000ff"/>
<rect x="738" y="151" width="3" height="1" fill="#0000ff"/>
<line x1="745.5" y1="141" x2="745.5" y2="165" stroke="#0000ff"/>
<rect x="744" y="151" width="3" height="1" fill="#0000ff"/>
<line x1="751.5" y1="151" x2="751.5" y2="162" stroke="#ff0000"/>
<rect x="750" y="151" width="3" height="11" fill="#ff0000"/>
<line x1="757.5" y1="151" x2="757.5" y2="162" stroke="#0000ff"/>
<rect x="756" y="151" width="3" height="11" fill="#0000ff"/>
<line x1="763.5" y1="146" x2="763.5" y2="162" stroke="#0000ff"/>
<rect x="762" y="151" width="3" height="1" fill="#0000ff"/>
<line x1="769.5" y1="151" x2="769.5" y2="162" stroke="#ff0000"/>
<rect x="768" y="151" width="3" height="11" fill="#ff0000"/>
<line x1="775.5" y1="146" x2="775.5" y2="165" stroke="#0000ff"/>
<rect x="774" y="151" width="3" height="1" fill="#0000ff"/>
<line x1="781.5" y1="146" x2="781.5" y2="167" stroke="#0000ff"/>
<rect x="780" y="151" width="3" height="1" fill="#0000ff"/>
<line x1="787.5" y1="146" x2="787.5" y2="162" stroke="#ff0000"/>
<rect x="786" y="151" width="3" height="6" fill="#ff0000"/>
<line x1="793.5" y1="146" x2="793.5" y2="162" stroke="#0000ff"/>
<rect x="792" y="146" width="3" height="1" fill="#0000ff"/>
<line x1="799.5" y1="146" x2="799.5" y2="159" stroke="#0000ff"/>
<rect x="798" y="151" width="3" height="1" fill="#0000ff"/>
<line x1="805.5" y1="146" x2="805.5" y2="157" stroke="#0000ff"/>
<rect x="804" y="151" width="3" height="1" fill="#0000ff"/>
<line x1="811.5" y1="151" x2="811.5" y2="162" stroke="#ff0000"/>
<rect x="810" y="151" width="3" height="11" fill="#ff0000"/>
<line x1="817.5" y1="151" x2="817.5" y2="162" stroke="#ff0000"/>
<rect x="816" y="151" width="3" height="11" fill="#ff0000"/>
<line x1="823.5" y1="146" x2="823.5" y2="157" stroke="#0000ff"/>
<rect x="822" y="151" width="3" height="1" fill="#0000ff"/>
<line x1="829.5" y1="141" x2="829.5" y2="162" stroke="#ff0000"/>
<rect x="828" y="151" width="3" height="11" fill="#ff0000"/>
<line x1="835.5" y1="146" x2="835.5" y2="159" stroke="#0000ff"/>
<rect x="834" y="151" width="3" height="1" fill="#0000ff"/>
<line x1="841.5" y1="151" x2="841.5" y2="162" stroke="#0000ff"/>
<rect x="840" y="151" width="3" height="11" fill="#0000ff"/>
<line x1="847.5" y1="151" x2="847.5" y2="162" stroke="#ff0000"/>
<rect x="846" y="151" width="3" height="11" fill="#ff0000"/>
<line x1="853.5" y1="151" x2="853.5" y2="162" stroke="#ff0000"/>
<rect x="852" y="151" width="3" height="11" fill="#ff0000"/>
<line x1="859.5" y1="148" x2="859.5" y2="159" stroke="#0000ff"/>
<rect x="858" y="151" width="3" height="1" fill="#0000ff"/>
<line x1="865.5" y1="151" x2="865.5" y2="162" stroke="#0000ff"/>
<rect x="864" y="151" width="3" height="11" fill="#0000ff"/>
<line x1="871.5" y1="151" x2="871.5" y2="162" stroke="#ff0000"/>
<rect x="870" y="151" width="3" height="11" fill="#ff0000"/>
<line x1="877.5" y1="148" x2="877.5" y2="162" stroke="#0000ff"/>
<rect x="876" y="151" width="3" height="1" fill="#0000ff"/>
<line x1="883.5" y1="151" x2="883.5" y2="162" stroke="#0000ff"/>
<rect x="882" y="161" width="3" height="1" fill="#0000ff"/>
<line x1="889.5" y1="158" x2="889.5" y2="164" stroke="#0000ff"/>
<rect x="888" y="161" width="3" height="1" fill="#0000ff"/>
<line x1="895.5" y1="161" x2="895.5" y2="172" stroke="#0000ff"/>
<rect x="894" y="161" width="3" height="11" fill="#0000ff"/>
<line x1="901.5" y1="161" x2="901.5" y2="172" stroke="#0000ff"/>
<rect x="900" y="171" width="3" height="1" fill="#0000ff"/>
<line x1="907.5" y1="161" x2="907.5" y2="172" stroke="#0000ff"/>
<rect x="906" y="161" width="3" height="11" fill="#0000ff"/>
<line x1="913.5" y1="161" x2="913.5" y2="172" stroke="#ff0000"/>
<rect x="912" y="161" width="3" height="11" fill="#ff0000"/>
<line x1="919.5" y1="161" x2="919.5" y2="172" stroke="#0000ff"/>
<rect x="918" y="171" width="3" height="1" fill="#0000ff"/>
<line x1="925.5" y1="161" x2="925.5" y2="172" stroke="#0000ff"/>
<rect x="924" y="171" width="3" height="1" fill="#0000ff"/>
<line x1="931.5" y1="168" x2="931.5" y2="173" stroke="#0000ff"/>
<rect x="930" y="171" width="3" height="1" fill="#0000ff"/>
<line x1="937.5" y1="151" x2="937.5" y2="172" stroke="#ff0000"/>
<rect x="936" y="161" width="3" height="1" fill="#ff0000"/>
<line x1="943.5" y1="161" x2="943.5" y2="172" stroke="#ff0000"/>
<rect x="942" y="161" width="3" height="11" fill="#ff0000"/>
<line x1="949.5" y1="151" x2="949.5" y2="172" stroke="#ff0000"/>
<rect x="948" y="151" width="3" height="11" fill="#ff0000"/>
<line x1="955.5" y1="151" x2="955.5" y2="162" stroke="#0000ff"/>
<rect x="954" y="161" width="3" height="1" fill="#0000ff"/>
<line x1="961.5" y1="151" x2="961.5" y2="162" stroke="#0000ff"/>
<rect x="960" y="161" width="3" height="1" fill="#0000ff"/>
<line x1="967.5" y1="151" x2="967.5" y2="162" stroke="#ff0000"/>
<rect x="966" y="151" width="3" height="11" fill="#ff0000"/>
<line x1="973.5" y1="151" x2="973.5" y2="162" stroke="#0000ff"/>
<rect x="972" y="156" width="3" height="1" fill="#0000ff"/>
<line x1="979.5" y1="151" x2="979.5" y2="162" stroke="#0000ff"/>
<rect x="978" y="151" width="3" height="11" fill="#0000ff"/>
<line x1="985.5" y1="141" x2="985.5" y2="162" stroke="#ff0000"/>
<rect x="984" y="156" width="3" height="1" fill="#ff0000"/>
<line x1="991.5" y1="151" x2="991.5" y2="162" stroke="#0000ff"/>
<rect x="990" y="156" width="3" height="1" fill="#0000ff"/>
<line x1="997.5" y1="151" x2="997.5" y2="162" stroke="#0000ff"/>
<rect x="996" y="161" width="3" height="1" fill="#0000ff"/>
<line x1="1003.5" y1="151" x2="1003.5" y2="162" stroke="#0000ff"/>
<rect x="1002" y="161" width="3" height="1" fill="#0000ff"/>
<line x1="1009.5" y1="151" x2="1009.5" y2="162" stroke="#ff0000"/>
<rect x="1008" y="151" width="3" height="11" fill="#ff0000"/>
<line x1="1015.5" y1="141" x2="1015.5" y2="152" stroke="#0000ff"/>
<rect x="1014" y="151" width="3" height="1" fill="#0000ff"/>
<line x1="1021.5" y1="141" x2="1021.5" y2="162" stroke="#0000ff"/>
<rect x="1020" y="141" width="3" height="11" fill="#0000ff"/>
<line x1="1027.5" y1="151" x2="1027.5" y2="162" stroke="#ff0000"/>
<rect x="1026" y="151" width="3" height="11" fill="#ff0000"/>
<line x1="1033.5" y1="151" x2="1033.5" y2="162" stroke="#0000ff"/>
<rect x="1032" y="161" width="3" height="1" fill="#0000ff"/>
<line x1="1039.5" y1="141" x2="1039.5" y2="162" stroke="#ff0000"/>
<rect x="1038" y="156" width="3" height="1" fill="#ff0000"/>
<line x1="1045.5" y1="151" x2="1045.5" y2="162" stroke="#0000ff"/>
<rect x="1044" y="161" width="3" height="1" fill="#0000ff"/>
<line x1="1051.5" y1="151" x2="1051.5" y2="162" stroke="#ff0000"/>
<rect x="1050" y="151" width="3" height="11" fill="#ff0000"/>
<line x1="1057.5" y1="141" x2="1057.5" y2="152" stroke="#ff0000"/>
<rect x="1056" y="141" width="3" height="11" fill="#ff0000"/>
<line x1="1063.5" y1="148" x2="1063.5" y2="154" stroke="#0000ff"/>
<rect x="1062" y="151" width="3" height="1" fill="#0000ff"/>
<line x1="1069.5" y1="148" x2="1069.5" y2="154" stroke="#0000ff"/>
<rect x="1068" y="151" width="3" height="1" fill="#0000ff"/>
<line x1="1075.5" y1="131" x2="1075.5" y2="152" stroke="#0000ff"/>
<rect x="1074" y="141" width="3" height="11" fill="#0000ff"/>
<line x1="1081.5" y1="131" x2="1081.5" y2="152" stroke="#ff0000"/>
<rect x="1080" y="146" width="3" height="1" fill="#ff0000"/>
<line x1="1087.5" y1="141" x2="1087.5" y2="152" stroke="#0000ff"/>
<rect x="1086" y="141" width="3" height="11" fill="#0000ff"/>
<line x1="1093.5" y1="141" x2="1093.5" y2="152" stroke="#0000ff"/>
<rect x="1092" y="146" width="3" height="1" fill="#0000ff"/>
<line x1="1099.5" y1="141" x2="1099.5" y2="152" stroke="#ff0000"/>
<rect x="1098" y="141" width="3" height="11" fill="#ff0000"/>
<line x1="1105.5" y1="141" x2="1105.5" y2="157" stroke="#0000ff"/>
<rect x="1104" y="146" width="3" height="1" fill="#0000ff"/>
<line x1="1111.5" y1="141" x2="1111.5" y2="157" stroke="#0000ff"/>
<rect x="1110" y="146" width="3" height="1" fill="#0000ff"/>
<line x1="1117.5" y1="141" x2="1117.5" y2="152" stroke="#ff0000"/>
<rect x="1116" y="141" width="3" height="11" fill="#ff0000"/>
<line x1="1123.5" y1="141" x2="1123.5" y2="159" stroke="#0000ff"/>
<rect x="1122" y="146" width="3" height="1" fill="#0000ff"/>
<line x1="1129.5" y1="141" x2="1129.5" y2="152" stroke="#ff0000"/>
<rect x="1128" y="141" width="3" height="11" fill="#ff0000"/>
<line x1="1135.5" y1="141" x2="1135.5" y2="152" stroke="#0000ff"/>
<rect x="1134" y="141" width="3" height="11" fill="#0000ff"/>
<line x1="1141.5" y1="141" x2="1141.5" y2="152" stroke="#0000ff"/>
<rect x="1140" y="141" width="3" height="11" fill="#0000ff"/>
<line x1="1147.5" y1="141" x2="1147.5" y2="152" stroke="#ff0000"/>
<rect x="1146" y="141" width="3" height="11" fill="#ff0000"/>
<line x1="1153.5" y1="141" x2="1153.5" y2="152" stroke="#0000ff"/>
<rect x="1152" y="141" width="3" height="11" fill="#0000ff"/>
<line x1="1159.5" y1="141" x2="1159.5" y2="142" stroke="#0000ff"/>
<rect x="1158" y="141" width="3" height="1" fill="#0000ff"/>
<line x1="1165.5" y1="141" x2="1165.5" y2="142" stroke="#0000ff"/>
<rect x="1164" y="141" width="3" height="1" fill="#0000ff"/>
<line x1="1171.5" y1="141" x2="1171.5" y2="152" stroke="#0000ff"/>
<rect x="1170" y="141" width="3" height="11" fill="#0000ff"/>
<line x1="1177.5" y1="141" x2="1177.5" y2="152" stroke="#ff0000"/>
<rect x="1176" y="141" width="3" height="1" fill="#ff0000"/>
<line x1="1183.5" y1="141" x2="1183.5" y2="152" stroke="#0000ff"/>
<rect x="1182" y="141" width="3" height="1" fill="#0000ff"/>
<line x1="1189.5" y1="141" x2="1189.5" y2="142" stroke="#0000ff"/>
<rect x="1188" y="141" width="3" height="1" fill="#0000ff"/>
<line x1="1195.5" y1="141" x2="1195.5" y2="152" stroke="#0000ff"/>
<rect x="1194" y="141" width="3" height="11" fill="#0000ff"/>
<line x1="1201.5" y1="148" x2="1201.5" y2="152" stroke="#0000ff"/>
<rect x="1200" y="151" width="3" height="1" fill="#0000ff"/>
<line x1="1207.5" y1="141" x2="1207.5" y2="152" stroke="#ff0000"/>
<rect x="1206" y="141" width="3" height="11" fill="#ff0000"/>
<line x1="1213.5" y1="141" x2="1213.5" y2="152" stroke="#0000ff"/>
<rect x="1212" y="141" width="3" height="11" fill="#0000ff"/>
<line x1="1219.5" y1="146" x2="1219.5" y2="147" stroke="#0000ff"/>
<rect x="1218" y="146" width="3" height="1" fill="#0000ff"/>
<line x1="1225.5" y1="149" x2="1225.5" y2="152" stroke="#0000ff"/>
<rect x="1224" y="151" width="3" height="1" fill="#0000ff"/>
<line x1="1231.5" y1="146" x2="1231.5" y2="147" stroke="#0000ff"/>
<rect x="1230" y="146" width="3" height="1" fill="#0000ff"/>
<line x1="1237.5" y1="141" x2="1237.5" y2="152" stroke="#ff0000"/>
<rect x="1236" y="141" width="3" height="11" fill="#ff0000"/>
<line x1="1243.5" y1="141" x2="1243.5" y2="152" stroke="#0000ff"/>
<rect x="1242" y="146" width="3" height="1" fill="#0000ff"/>
<line x1="1249.5" y1="141" x2="1249.5" y2="152" stroke="#0000ff"/>
<rect x="1248" y="141" width="3" height="11" fill="#0000ff"/>
<line x1="1255.5" y1="141" x2="1255.5" y2="153" stroke="#ff0000"/>
<rect x="1254" y="146" width="3" height="1" fill="#ff0000"/>
<line x1="1261.5" y1="141" x2="1261.5" y2="193" stroke="#ff0000"/>
<rect x="1260" y="150" width="3" height="32" fill="#ff0000"/>
</g>
<g id="vol">
<rect x="0" y="290" width="3" height="1" fill="#109010"/>
<rect x="12" y="290" width="3" height="1" fill="#109010"/>
<rect x="24" y="290" width="3" height="1" fill="#109010"/>
<rect x="30" y="290" width="3" height="1" fill="#109010"/>
<rect x="42" y="288" width="3" height="3" fill="#109010"/>
<rect x="48" y="234" width="3" height="57" fill="#109010"/>
<rect x="54" y="257" width="3" height="34" fill="#109010"/>
<rect x="60" y="269" width="3" height="22" fill="#109010"/>
<rect x="66" y="280" width="3" height="11" fill="#109010"/>
<rect x="72" y="284" width="3" height="7" fill="#109010"/>
<rect x="78" y="267" width="3" height="24" fill="#109010"/>
<rect x="84" y="278" width="3" height="13" fill="#109010"/>
<rect x="90" y="265" width="3" height="26" fill="#109010"/>
<rect x="96" y="288" width="3" height="3" fill="#109010"/>
<rect x="102" y="290" width="3" height="1" fill="#109010"/>
<rect x="108" y="285" width="3" height="6" fill="#109010"/>
<rect x="114" y="287" width="3" height="4" fill="#109010"/>
<rect x="120" y="285" width="3" height="6" fill="#109010"/>
<rect x="126" y="282" width="3" height="9" fill="#109010"/>
<rect x="132" y="280" width="3" height="11" fill="#109010"/>
<rect x="138" y="279" width="3" height="12" fill="#109010"/>
<rect x="144" y="276" width="3" height="15" fill="#109010"/>
<rect x="150" y="266" width="3" height="25" fill="#109010"/>
<rect x="156" y="278" width="3" height="13" fill="#109010"/>
<rect x="162" y="280" width="3" height="11" fill="#109010"/>
<rect x="168" y="280" width="3" height="11" fill="#109010"/>
<rect x="174" y="254" width="3" height="37" fill="#109010"/>
<rect x="180" y="279" width="3" height="12" fill="#109010"/>
<rect x="186" y="277" width="3" height="14" fill="#109010"/>
<rect x="192" y="267" width="3" height="24" fill="#109010"/>
<rect x="198" y="283" width="3" height="8" fill="#109010"/>
<rect x="204" y="284" width="3" height="7" fill="#109010"/>
<rect x="210" y="283" width="3" height="8" fill="#109010"/>
<rect x="216" y="287" width="3" height="4" fill="#109010"/>
<rect x="222" y="284" width="3" height="7" fill="#109010"/>
<rect x="228" y="283" width="3" height="8" fill="#109010"/>
<rect x="234" y="288" width="3" height="3" fill="#109010"/>
<rect x="240" y="289" width="3" height="2" fill="#109010"/>
<rect x="246" y="279" width="3" height="12" fill="#109010"/>
<rect x="252" y="288" width="3" height="3" fill="#109010"/>
<rect x="258" y="290" width="3" height="1" fill="#109010"/>
<rect x="264" y="278" width="3" height="13" fill="#109010"/>
<rect x="270" y="288" width="3" height="3" fill="#109010"/>
<rect x="276" y="290" width="3" height="1" fill="#109010"/>
<rect x="282" y="290" width="3" height="1" fill="#109010"/>
<rect x="294" y="284" width="3" height="7" fill="#109010"/>
<rect x="300" y="277" width="3" height="14" fill="#109010"/>
<rect x="306" y="277" width="3" height="14" fill="#109010"/>
<rect x="312" y="278" width="3" height="13" fill="#109010"/>
<rect x="318" y="280" width="3" height="11" fill="#109010"/>
<rect x="324" y="286" width="3" height="5" fill="#109010"/>
<rect x="330" y="284" width="3" height="7" fill="#109010"/>
<rect x="336" y="284" width="3" height="7" fill="#109010"/>
<rect x="348" y="290" width="3" height="1" fill="#109010"/>
<rect x="354" y="280" width="3" height="11" fill="#109010"/>
<rect x="360" y="280" width="3" height="11" fill="#109010"/>
<rect x="366" y="283" width="3" height="8" fill="#109010"/>
<rect x="372" y="287" width="3" height="4" fill="#109010"/>
<rect x="378" y="287" width="3" height="4" fill="#109010"/>
<rect x="384" y="273" width="3" height="18" fill="#109010"/>
<rect x="390" y="255" width="3" height="36" fill="#109010"/>
<rect x="396" y="277" width="3" height="14" fill="#109010"/>
<rect x="402" y="278" width="3" height="13" fill="#109010"/>
<rect x="408" y="271" width="3" height="20" fill="#109010"/>
<rect x="414" y="287" width="3" height="4" fill="#109010"/>
<rect x="420" y="287" width="3" height="4" fill="#109010"/>
<rect x="426" y="285" width="3" height="6" fill="#109010"/>
<rect x="432" y="287" width="3" height="4" fill="#109010"/>
<rect x="438" y="285" width="3" height="6" fill="#109010"/>
<rect x="444" y="267" width="3" height="24" fill="#109010"/>
<rect x="450" y="286" width="3" height="5" fill="#109010"/>
<rect x="456" y="284" width="3" height="7" fill="#109010"/>
<rect x="462" y="284" width="3" height="7" fill="#109010"/>
<rect x="468" y="266" width="3" height="25" fill="#109010"/>
<rect x="474" y="286" width="3" height="5" fill="#109010"/>
<rect x="480" y="273" width="3" height="18" fill="#109010"/>
<rect x="486" y="263" width="3" height="28" fill="#109010"/>
<rect x="498" y="272" width="3" height="19" fill="#109010"/>
<rect x="504" y="273" width="3" height="18" fill="#109010"/>
<rect x="510" y="286" width="3" height="5" fill="#109010"/>
<rect x="516" y="285" width="3" height="6" fill="#109010"/>
<rect x="522" y="290" width="3" height="1" fill="#109010"/>
<rect x="528" y="290" width="3" height="1" fill="#109010"/>
<rect x="534" y="286" width="3" height="5" fill="#109010"/>
<rect x="540" y="288" width="3" height="3" fill="#109010"/>
<rect x="546" y="283" width="3" height="8" fill="#109010"/>
<rect x="552" y="290" width="3" height="1" fill="#109010"/>
<rect x="558" y="286" width="3" height="5" fill="#109010"/>
<rect x="564" y="289" width="3" height="2" fill="#109010"/>
<rect x="570" y="290" width="3" height="1" fill="#109010"/>
<rect x="582" y="289" width="3" height="2" fill="#109010"/>
<rect x="588" y="287" width="3" height="4" fill="#109010"/>
<rect x="594" y="290" width="3" height="1" fill="#109010"/>
<rect x="618" y="288" width="3" height="3" fill="#109010"/>
<rect x="624" y="289" width="3" height="2" fill="#109010"/>
<rect x="630" y="289" width="3" height="2" fill="#109010"/>
<rect x="636" y="282" width="3" height="9" fill="#109010"/>
<rect x="642" y="279" width="3" height="12" fill="#109010"/>
<rect x="648" y="288" width="3" height="3" fill="#109010"/>
<rect x="654" y="287" width="3" height="4" fill="#109010"/>
<rect x="660" y="289" width="3" height="2" fill="#109010"/>
<rect x="666" y="290" width="3" height="1" fill="#109010"/>
<rect x="672" y="289" width="3" height="2" fill="#109010"/>
<rect x="678" y="290" width="3" height="1" fill="#109010"/>
<rect x="690" y="287" width="3" height="4" fill="#109010"/>
<rect x="726" y="289" width="3" height="2" fill="#109010"/>
<rect x="732" y="290" width="3" height="1" fill="#109010"/>
<rect x="738" y="290" width="3" height="1" fill="#109010"/>
<rect x="744" y="290" width="3" height="1" fill="#109010"/>
<rect x="756" y="289" width="3" height="2" fill="#109010"/>
<rect x="774" y="290" width="3" height="1" fill="#109010"/>
<rect x="780" y="287" width="3" height="4" fill="#109010"/>
<rect x="822" y="290" width="3" height="1" fill="#109010"/>
<rect x="828" y="289" width="3" height="2" fill="#109010"/>
<rect x="888" y="288" width="3" height="3" fill="#109010"/>
<rect x="894" y="290" width="3" height="1" fill="#109010"/>
<rect x="924" y="289" width="3" height="2" fill="#109010"/>
<rect x="930" y="290" width="3" height="1" fill="#109010"/>
<rect x="936" y="290" width="3" height="1" fill="#109010"/>
<rect x="942" y="289" width="3" height="2" fill="#109010"/>
<rect x="948" y="290" width="3" height="1" fill="#109010"/>
<rect x="954" y="290" width="3" height="1" fill="#109010"/>
<rect x="960" y="290" width="3" height="1" fill="#109010"/>
<rect x="984" y="290" width="3" height="1" fill="#109010"/>
<rect x="990" y="290" width="3" height="1" fill="#109010"/>
<rect x="1008" y="290" width="3" height="1" fill="#109010"/>
<rect x="1020" y="289" width="3" height="2" fill="#109010"/>
<rect x="1038" y="290" width="3" height="1" fill="#109010"/>
<rect x="1044" y="290" width="3" height="1" fill="#109010"/>
<rect x="1050" y="290" width="3" height="1" fill="#109010"/>
<rect x="1062" y="290" width="3" height="1" fill="#109010"/>
<rect x="1074" y="289" width="3" height="2" fill="#109010"/>
<rect x="1080" y="288" width="3" height="3" fill="#109010"/>
<rect x="1254" y="288" width="3" height="3" fill="#109010"/>
<rect x="1260" y="245" width="3" height="46" fill="#109010"/>
<rect x="1266" y="272" width="3" height="19" fill="#109010"/>
<line x1="0" y1="291.5" x2="1269" y2="291.5" stroke="#000000" stroke-width="1"/>
</g>
<g id="macd">
<line x1="0" y1="348.5" x2="1269" y2="348.5" stroke="#606060" stroke-width="1"/>
<rect x="1" y="345" width="1" height="3" fill="#ff0000"/>
<rect x="7" y="345.5" width="1" height="2.5" fill="#ff0000"/>
<rect x="13" y="346" width="1" height="2" fill="#ff0000"/>
<rect x="19" y="346" width="1" height="2" fill="#ff0000"/>
<rect x="25" y="347" width="1" height="1" fill="#ff0000"/>
<rect x="31" y="347" width="1" height="1" fill="#ff0000"/>
<rect x="43" y="349" width="1" height="1.5" fill="#ff0000"/>
<rect x="49" y="349" width="1" height="7" fill="#ff0000"/>
<rect x="55" y="349" width="1" height="10" fill="#ff0000"/>
<rect x="61" y="349" width="1" height="13" fill="#ff0000"/>
<rect x="67" y="349" width="1" height="13" fill="#ff0000"/>
<rect x="73" y="349" width="1" height="12" fill="#ff0000"/>
<rect x="79" y="349" width="1" height="12" fill="#ff0000"/>
<rect x="85" y="349" width="1" height="13" fill="#ff0000"/>
<rect x="91" y="349" width="1" height="12" fill="#ff0000"/>
<rect x="97" y="349" width="1" height="12" fill="#ff0000"/>
<rect x="103" y="349" width="1" height="11" fill="#ff0000"/>
<rect x="109" y="349" width="1" height="9" fill="#ff0000"/>
<rect x="115" y="349" width="1" height="6" fill="#ff0000"/>
<rect x="121" y="349" width="1" height="4" fill="#ff0000"/>
<rect x="127" y="349" width="1" height="2.5" fill="#ff0000"/>
<rect x="133" y="349" width="1" height="3.5" fill="#ff0000"/>
<rect x="139" y="349" width="1" height="1" fill="#ff0000"/>
<rect x="145" y="348" width="1" height="1" fill="#ff0000"/>
<rect x="151" y="348" width="1" height="1" fill="#ff0000"/>
<rect x="157" y="348" width="1" height="1" fill="#ff0000"/>
<rect x="163" y="348" width="1" height="1" fill="#ff0000"/>
<rect x="175" y="349" width="1" height="1" fill="#ff0000"/>
<rect x="181" y="349" width="1" height="3.5" fill="#ff0000"/>
<rect x="187" y="349" width="1" height="1.5" fill="#ff0000"/>
<rect x="193" y="348" width="1" height="1" fill="#ff0000"/>
<rect x="199" y="348" width="1" height="1" fill="#ff0000"/>
<rect x="205" y="347" width="1" height="1" fill="#ff0000"/>
<rect x="211" y="347" width="1" height="1" fill="#ff0000"/>
<rect x="217" y="347" width="1" height="1" fill="#ff0000"/>
<rect x="223" y="347" width="1" height="1" fill="#ff0000"/>
<rect x="229" y="346.5" width="1" height="1.5" fill="#ff0000"/>
<rect x="235" y="345" width="1" height="3" fill="#ff0000"/>
<rect x="241" y="344" width="1" height="4" fill="#ff0000"/>
<rect x="247" y="343" width="1" height="5" fill="#ff0000"/>
<rect x="253" y="343" width="1" height="5" fill="#ff0000"/>
<rect x="259" y="342" width="1" height="6" fill="#ff0000"/>
<rect x="265" y="343" width="1" height="5" fill="#ff0000"/>
<rect x="271" y="343" width="1" height="5" fill="#ff0000"/>
<rect x="277" y="343" width="1" height="5" fill="#ff0000"/>
<rect x="283" y="344" width="1" height="4" fill="#ff0000"/>
<rect x="289" y="345" width="1" height="3" fill="#ff0000"/>
<rect x="295" y="345" width="1" height="3" fill="#ff0000"/>
<rect x="301" y="347" width="1" height="1" fill="#ff0000"/>
<rect x="319" y="348" width="1" height="1" fill="#ff0000"/>
<rect x="325" y="349" width="1" height="1" fill="#ff0000"/>
<rect x="331" y="349" width="1" height="2" fill="#ff0000"/>
<rect x="337" y="349" width="1" height="2" fill="#ff0000"/>
<rect x="343" y="349" width="1" height="2" fill="#ff0000"/>
<rect x="349" y="349" width="1" height="1.5" fill="#ff0000"/>
<rect x="355" y="349" width="1" height="2.5" fill="#ff0000"/>
<rect x="361" y="349" width="1" height="2.5" fill="#ff0000"/>
<rect x="367" y="349" width="1" height="2.5" fill="#ff0000"/>
<rect x="373" y="349" width="1" height="2" fill="#ff0000"/>
<rect x="379" y="348" width="1" height="1" fill="#ff0000"/>
<rect x="385" y="347" width="1" height="1" fill="#ff0000"/>
<rect x="391" y="347" width="1" height="1" fill="#ff0000"/>
<rect x="397" y="347" width="1" height="1" fill="#ff0000"/>
<rect x="403" y="346" width="1" height="2" fill="#ff0000"/>
<rect x="409" y="345.5" width="1" height="2.5" fill="#ff0000"/>
<rect x="415" y="344.5" width="1" height="3.5" fill="#ff0000"/>
<rect x="421" y="344.5" width="1" height="3.5" fill="#ff0000"/>
<rect x="427" y="345.5" width="1" height="2.5" fill="#ff0000"/>
<rect x="433" y="345.5" width="1" height="2.5" fill="#ff0000"/>
<rect x="439" y="345.5" width="1" height="2.5" fill="#ff0000"/>
<rect x="445" y="344.5" width="1" height="3.5" fill="#ff0000"/>
<rect x="451" y="344.5" width="1" height="3.5" fill="#ff0000"/>
<rect x="457" y="345.5" width="1" height="2.5" fill="#ff0000"/>
<rect x="463" y="346" width="1" height="2" fill="#ff0000"/>
<rect x="475" y="349" width="1" height="1" fill="#ff0000"/>
<rect x="481" y="349" width="1" height="4" fill="#ff0000"/>
<rect x="487" y="349" width="1" height="4" fill="#ff0000"/>
<rect x="493" y="349" width="1" height="5" fill="#ff0000"/>
<rect x="499" y="349" width="1" height="6" fill="#ff0000"/>
<rect x="505" y="349" width="1" height="8" fill="#ff0000"/>
<rect x="511" y="349" width="1" height="11" fill="#ff0000"/>
<rect x="517" y="349" width="1" height="12" fill="#ff0000"/>
<rect x="523" y="349" width="1" height="11" fill="#ff0000"/>
<rect x="529" y="349" width="1" height="10" fill="#ff0000"/>
<rect x="535" y="349" width="1" height="8" fill="#ff0000"/>
<rect x="541" y="349" width="1" height="5" fill="#ff0000"/>
<rect x="547" y="349" width="1" height="2" fill="#ff0000"/>
<rect x="553" y="349" width="1" height="1" fill="#ff0000"/>
<rect x="571" y="347" width="1" height="1" fill="#ff0000"/>
<rect x="577" y="347" width="1" height="1" fill="#ff0000"/>
<rect x="583" y="345" width="1" height="3" fill="#ff0000"/>
<rect x="589" y="346" width="1" height="2" fill="#ff0000"/>
<rect x="595" y="344" width="1" height="4" fill="#ff0000"/>
<rect x="601" y="344" width="1" height="4" fill="#ff0000"/>
<rect x="607" y="343" width="1" height="5" fill="#ff0000"/>
<rect x="613" y="343" width="1" height="5" fill="#ff0000"/>
<rect x="619" y="343" width="1" height="5" fill="#ff0000"/>
<rect x="625" y="344" width="1" height="4" fill="#ff0000"/>
<rect x="631" y="345" width="1" height="3" fill="#ff0000"/>
<rect x="637" y="342" width="1" height="6" fill="#ff0000"/>
<rect x="643" y="341" width="1" height="7" fill="#ff0000"/>
<rect x="649" y="340" width="1" height="8" fill="#ff0000"/>
<rect x="655" y="340" width="1" height="8" fill="#ff0000"/>
<rect x="661" y="341" width="1" height="7" fill="#ff0000"/>
<rect x="667" y="340" width="1" height="8" fill="#ff0000"/>
<rect x="673" y="342" width="1" height="6" fill="#ff0000"/>
<rect x="679" y="343" width="1" height="5" fill="#ff0000"/>
<rect x="685" y="344" width="1" height="4" fill="#ff0000"/>
<rect x="691" y="347" width="1" height="1" fill="#ff0000"/>
<rect x="697" y="347" width="1" height="1" fill="#ff0000"/>
<rect x="703" y="347" width="1" height="1" fill="#ff0000"/>
<rect x="709" y="347" width="1" height="1" fill="#ff0000"/>
<rect x="721" y="348" width="1" height="1" fill="#ff0000"/>
<rect x="727" y="348" width="1" height="1" fill="#ff0000"/>
<rect x="733" y="348" width="1" height="1" fill="#ff0000"/>
<rect x="739" y="348" width="1" height="1" fill="#ff0000"/>
<rect x="745" y="348" width="1" height="1" fill="#ff0000"/>
<rect x="751" y="348" width="1" height="1" fill="#ff0000"/>
<rect x="757" y="349" width="1" height="1" fill="#ff0000"/>
<rect x="763" y="349" width="1" height="1" fill="#ff0000"/>
<rect x="769" y="349" width="1" height="1" fill="#ff0000"/>
<rect x="775" y="349" width="1" height="1" fill="#ff0000"/>
<rect x="781" y="349" width="1" height="1" fill="#ff0000"/>
<rect x="787" y="349" width="1" height="1" fill="#ff0000"/>
<rect x="793" y="349" width="1" height="1" fill="#ff0000"/>
<rect x="799" y="349" width="1" height="1" fill="#ff0000"/>
<rect x="805" y="349" width="1" height="1" fill="#ff0000"/>
<rect x="817" y="347" width="1" height="1" fill="#ff0000"/>
<rect x="823" y="347" width="1" height="1" fill="#ff0000"/>
<rect x="829" y="347" width="1" height="1" fill="#ff0000"/>
<rect x="835" y="347" width="1" height="1" fill="#ff0000"/>
<rect x="841" y="347" width="1" height="1" fill="#ff0000"/>
<rect x="895" y="349" width="1" height="1.5" fill="#ff0000"/>
<rect x="901" y="349" width="1" height="1.5" fill="#ff0000"/>
<rect x="907" y="349" width="1" height="1.5" fill="#ff0000"/>
<rect x="913" y="349" width="1" height="1.5" fill="#ff0000"/>
<rect x="919" y="349" width="1" height="1.5" fill="#ff0000"/>
<rect x="925" y="349" width="1" height="1.5" fill="#ff0000"/>
<rect x="931" y="349" width="1" height="1" fill="#ff0000"/>
<rect x="937" y="348" width="1" height="1" fill="#ff0000"/>
<rect x="949" y="347" width="1" height="1" fill="#ff0000"/>
<rect x="955" y="346.5" width="1" height="1.5" fill="#ff0000"/>
<rect x="961" y="346.5" width="1" height="1.5" fill="#ff0000"/>
<rect x="967" y="346.5" width="1" height="1.5" fill="#ff0000"/>
<rect x="973" y="346" width="1" height="2" fill="#ff0000"/>
<rect x="979" y="346.5" width="1" height="1.5" fill="#ff0000"/>
<rect x="985" y="346.5" width="1" height="1.5" fill="#ff0000"/>
<rect x="991" y="346" width="1" height="2" fill="#ff0000"/>
<rect x="997" y="346.5" width="1" height="1.5" fill="#ff0000"/>
<rect x="1003" y="346.5" width="1" height="1.5" fill="#ff0000"/>
<rect x="1009" y="346.5" width="1" height="1.5" fill="#ff0000"/>
<rect x="1015" y="347" width="1" height="1" fill="#ff0000"/>
<rect x="1021" y="347" width="1" height="1" fill="#ff0000"/>
<rect x="1027" y="347" width="1" height="1" fill="#ff0000"/>
<rect x="1033" y="347" width="1" height="1" fill="#ff0000"/>
<rect x="1039" y="347" width="1" height="1" fill="#ff0000"/>
<rect x="1045" y="347" width="1" height="1" fill="#ff0000"/>
<rect x="1057" y="347" width="1" height="1" fill="#ff0000"/>
<rect x="1063" y="347" width="1" height="1" fill="#ff0000"/>
<rect x="1069" y="347" width="1" height="1" fill="#ff0000"/>
<rect x="1081" y="347" width="1" height="1" fill="#ff0000"/>
<rect x="1093" y="347" width="1" height="1" fill="#ff0000"/>
<rect x="1105" y="347" width="1" height="1" fill="#ff0000"/>
<rect x="1117" y="347" width="1" height="1" fill="#ff0000"/>
<rect x="1129" y="347" width="1" height="1" fill="#ff0000"/>
<rect x="1141" y="347" width="1" height="1" fill="#ff0000"/>
<rect x="1153" y="347" width="1" height="1" fill="#ff0000"/>
<rect x="1165" y="347" width="1" height="1" fill="#ff0000"/>
<rect x="1177" y="347" width="1" height="1" fill="#ff0000"/>
<rect x="1189" y="347" width="1" height="1" fill="#ff0000"/>
<rect x="1201" y="347" width="1" height="1" fill="#ff0000"/>
<rect x="1213" y="347" width="1" height="1" fill="#ff0000"/>
<rect x="1225" y="347" width="1" height="1" fill="#ff0000"/>
<rect x="1237" y="348" width="1" height="1" fill="#ff0000"/>
<rect x="1243" y="349" width="1" height="1" fill="#ff0000"/>
<rect x="1249" y="349" width="1" height="1" fill="#ff0000"/>
<rect x="1255" y="349" width="1" height="1" fill="#ff0000"/>
<rect x="1261" y="349" width="1" height="1.5" fill="#ff0000"/>
<rect x="1267" y="349" width="1" height="1" fill="#ff0000"/>
<polyline points="0,326 35,325 42,327.5 50,337.5 60,347.5 70,354 80,359 90,365 100,369 110,371 120,370 127,369 133,370.5 140,368 150,368 160,365.5 165,365.5 175,369 182,372.5 190,369.5 200,368 215,367 225,365.5 240,360 260,353 275,352 290,349 300,350 305,351.5 320,351.5 330,355.5 342,357 350,358 365,360.5 375,361 390,358 400,355 415,351 430,351.5 445,348 460,346 465,346 475,351.5 485,356 495,359 505,367.5 515,375 525,379.5 530,380.5 537,380.5 550,376 565,373 580,370.5 590,365.5 600,363 612,359.5 630,358 640,351 650,347 660,343 670,340 678,340 685,339 695,343 710,345 730,346.5 760,347.5 775,349 785,351 805,352 815,350 830,348.5 850,347.5 860,346.5 880,347 890,349 900,352 910,354 925,355 935,355.5 945,354 955,350 965,350 975,347.5 990,345.5 1005,345 1014,344 1030,344 1045,346 1060,343.5 1070,342.5 1090,343 1110,344.5 1130,345 1170,344.5 1200,345.5 1230,347 1255,348.5 1267,351" fill="none" stroke="#ffff00" stroke-width="1" />
<polyline points="0,330 20,327 38,326 50,330 65,337.5 80,345 95,355 110,361 125,365 135,366.5 150,367 155,366 170,366 180,368 200,368.75 215,367.5 225,367 240,364.5 260,360 275,356 292,352.5 320,352.5 330,353 342,354.5 345,354.5 360,356.5 375,358 390,357.5 410,355.5 430,352.5 450,349.5 462,347.5 470,347.5 480,349.5 495,354 510,360 525,367 540,372.5 550,374 565,374.5 580,372.5 600,369.5 615,365.5 630,362.5 645,357.5 660,351.5 670,348 678,346.5 690,344 715,344 720,345.5 755,345.5 770,346.5 780,348 800,349 810,350.5 820,350 830,349.5 850,349 855,347.5 890,347.5 895,349 905,350 915,351.5 930,353.5 945,353.5 955,351.5 970,350 985,349 1000,347.5 1014,346.5 1030,345.5 1040,346 1055,346 1065,344 1150,344.5 1170,345 1215,345 1225,346.5 1250,347 1260,348 1267,348.5" fill="none" stroke="#0000ff" stroke-width="1" />
</g>
<g id="sto">
<line x1="0" y1="426.5" x2="1269" y2="426.5" stroke="#0000ff" stroke-width="1"/>
<line x1="0" y1="461.5" x2="1269" y2="461.5" stroke="#ff0000" stroke-width="1"/>
<polyline points="0,422 10,418 25,415.5 37,415 45,419.5 50,428.75 56,440 62,446 70,450.5 78,451 85,455 92,458.75 98,461 110,461.5 118,458.75 127,454.5 135,454 145,452.5 152,449.5 160,446 168,446 175,448.75 181,453 187,450 195,446 203,443 212,443 220,444 228,444 235,441.5 243,436 250,430 258,425.5 265,424.5 275,425 283,426 290,427.5 296,430 302,440 308,446 315,450.5 322,453.75 330,458.75 336,461 342,461.5 375,461.5 382,457.5 390,451 398,447.5 405,443 412,437.5 418,433.75 424,432.5 430,433.5 440,434 447,432.5 453,431.5 460,433.75 466,438.75 472,446 478,453.75 484,458 490,460 496,458.75 502,460.5 508,463.75 514,466 520,467 530,467 537,464.5 545,460.5 552,457.5 560,455 567,452.5 575,450.5 581,445 588,440 595,432.5 601,430 607,425 613,421 619,421 625,427.5 631,433.75 640,432.5 650,430.5 660,433 670,432 678,432 683,432.5 690,437 697,441 703,445.5 712,446 720,448.75 727,452 735,453 751,453 757,455.5 763,458.75 769,462 780,462 787,466 793,469.5 799,471 805,471.5 811,467.5 817,456 823,441 829,432.5 835,433.75 841,442.5 847,447 853,449.5 859,447 865,449.5 871,451 877,452.5 883,455 889,460.5 895,465 901,468 907,469.5 913,466 919,464.5 925,465 931,468 937,464.5 943,460.5 949,446 955,440 961,437.5 967,432.5 973,428.75 979,427.5 985,430 991,433 1005,433.5 1027,434 1033,439.5 1039,443.75 1045,453.75 1051,453 1057,448 1063,435 1069,425.5 1075,426 1081,430 1087,438 1093,442.5 1099,444.5 1105,444.5 1111,446 1123,446 1129,443 1135,448.75 1141,455 1147,458 1153,461 1159,457.5 1165,449.5 1171,446 1177,440 1183,436 1189,426 1195,430 1201,441 1207,446 1213,449.5 1219,451 1225,461 1231,467 1237,457.5 1243,446 1249,440 1255,447 1261,452.5 1266,450" fill="none" stroke="#ff0000" stroke-width="1" />
<polyline points="0,419.5 8,417 20,415.5 37,415 42,425 48,440 55,443.75 62,452 68,452 73,448.75 80,451 85,462 95,461 108,461 115,457 122,453 127,451 133,456.5 138,453 143,451 150,450.5 157,444.5 163,444.5 170,451 175,453 181,454 186,448 193,443.5 197,444.5 203,442 210,441 217,443.75 223,445.75 228,442.5 237,436 242,433.75 248,428.75 253,427 259,421 265,424.5 271,428.75 277,422.5 283,427.5 290,431.5 295,430 301,451 307,454.5 313,450 319,453 325,463 331,462 337,461 342,461.5 352,462 373,462 380,455 386,447 391,448 397,448.5 403,441 409,435 415,432 421,430.5 427,437 433,433.75 440,434 445,431 451,430.5 457,436 463,440 469,450 475,455 481,463.75 487,460 493,458 499,460.5 505,464.5 511,468 517,467 529,467 535,463.75 541,458.75 547,456 553,456 559,453.75 565,448.75 571,450.5 577,449.5 583,432.5 589,438 595,426 601,428 607,421 613,418 619,427.5 625,435.5 631,438.75 637,427 643,430 649,431.5 655,432.5 661,433 667,429 673,431 680,431.5 685,433.75 691,442.5 697,448 703,446 709,444 715,446 721,452 727,453 751,453 757,462.5 763,467 769,455 775,463 781,467.5 787,470 793,471 799,472 805,472 811,460 817,438 823,425 829,433.75 835,438.75 841,455 847,448.75 853,446 859,445 865,458 871,451 877,447 883,460.5 889,466 895,468.75 901,471 907,471 913,457.5 919,464.5 925,467.5 931,470 937,457.5 943,450 949,432 955,438 961,441 967,427.5 973,421 979,432 985,433 995,433.75 1005,434 1027,434 1033,453 1039,448.75 1045,459.5 1051,450.5 1057,432.5 1063,424.5 1069,419.5 1075,435.5 1081,435 1087,443.75 1093,447.5 1099,441 1105,446 1111,449.5 1117,442 1123,447 1129,441 1135,455 1141,463.75 1147,454.5 1153,462.5 1159,451 1165,434.5 1171,453 1177,433.75 1183,424.5 1189,419.5 1195,447 1201,458.75 1207,438 1213,453.75 1219,462 1225,467.5 1231,469.5 1237,440.5 1243,428 1249,448.75 1255,460.5 1261,444.5 1266,446" fill="none" stroke="#0000ff" stroke-width="1" />
</g>
<g font-family="IPAGothic, 'Liberation Mono', monospace" font-size="12" fill="#000000" filter="url(#crisp)">
<text x="-2" y="15.5" xml:space="preserve">日経225mini 12/09( 5分, 2012/07/03 - 2012/07/05 )</text>
<text x="312" y="15.5" xml:space="preserve">一目均衡表( 9, 26, 52 )</text>
<text x="470" y="15.5" xml:space="preserve">移動平均( Close, 5 )</text>
<text x="610" y="15.5" xml:space="preserve">移動平均( Close, 10 )</text>
<text x="756" y="15.5" xml:space="preserve">移動平均( Close, 40 )</text>
<text x="902" y="15.5" xml:space="preserve">移動平均( Close, 150 )</text>
<text x="1054" y="15.5" xml:space="preserve">移動平均( Close, 75 )</text>
<text x="-2" y="29.5" xml:space="preserve">移動平均( Close, 20 )</text>
<text x="144" y="29.5" xml:space="preserve">移動平均( Close, 75 )</text>
<text x="290" y="29.5" xml:space="preserve">移動平均( Close, 25 )</text>
<text x="-2" y="227.5" xml:space="preserve">出来高</text>
<text x="-2" y="318.5" xml:space="preserve">MACD( 12, 26, 9 )</text>
<text x="-2" y="409.5" xml:space="preserve">スロー・ストキャスティクス( 14, 3, 80, 20 )</text>
</g>
<line x1="1269.5" y1="3" x2="1269.5" y2="515" stroke="#000000" stroke-width="1"/>
<line x1="0" y1="488.5" x2="1333" y2="488.5" stroke="#000000" stroke-width="1"/>
<line x1="19.5" y1="488" x2="19.5" y2="493" stroke="#000000" stroke-width="1"/>
<line x1="73.5" y1="488" x2="73.5" y2="493" stroke="#000000" stroke-width="1"/>
<line x1="169.5" y1="488" x2="169.5" y2="493" stroke="#000000" stroke-width="1"/>
<line x1="265.5" y1="488" x2="265.5" y2="493" stroke="#000000" stroke-width="1"/>
<line x1="361.5" y1="488" x2="361.5" y2="493" stroke="#000000" stroke-width="1"/>
<line x1="457.5" y1="488" x2="457.5" y2="493" stroke="#000000" stroke-width="1"/>
<line x1="565.5" y1="488" x2="565.5" y2="493" stroke="#000000" stroke-width="1"/>
<line x1="661.5" y1="488" x2="661.5" y2="493" stroke="#000000" stroke-width="1"/>
<line x1="757.5" y1="488" x2="757.5" y2="493" stroke="#000000" stroke-width="1"/>
<line x1="853.5" y1="488" x2="853.5" y2="493" stroke="#000000" stroke-width="1"/>
<line x1="949.5" y1="488" x2="949.5" y2="493" stroke="#000000" stroke-width="1"/>
<line x1="1045.5" y1="488" x2="1045.5" y2="493" stroke="#000000" stroke-width="1"/>
<line x1="1141.5" y1="488" x2="1141.5" y2="493" stroke="#000000" stroke-width="1"/>
<line x1="1237.5" y1="488" x2="1237.5" y2="493" stroke="#000000" stroke-width="1"/>
<line x1="1269" y1="21.5" x2="1275" y2="21.5" stroke="#000000" stroke-width="1"/>
<line x1="1269" y1="61.5" x2="1275" y2="61.5" stroke="#000000" stroke-width="1"/>
<line x1="1269" y1="101.5" x2="1275" y2="101.5" stroke="#000000" stroke-width="1"/>
<line x1="1269" y1="141.5" x2="1275" y2="141.5" stroke="#000000" stroke-width="1"/>
<line x1="1269" y1="181.5" x2="1275" y2="181.5" stroke="#000000" stroke-width="1"/>
<line x1="1269" y1="233.5" x2="1275" y2="233.5" stroke="#000000" stroke-width="1"/>
<line x1="1269" y1="270.5" x2="1275" y2="270.5" stroke="#000000" stroke-width="1"/>
<line x1="1269" y1="324.5" x2="1275" y2="324.5" stroke="#000000" stroke-width="1"/>
<line x1="1269" y1="361.5" x2="1275" y2="361.5" stroke="#000000" stroke-width="1"/>
<line x1="1269" y1="414.5" x2="1275" y2="414.5" stroke="#000000" stroke-width="1"/>
<line x1="1269" y1="452.5" x2="1275" y2="452.5" stroke="#000000" stroke-width="1"/>
<g font-family="IPAGothic, 'Liberation Mono', monospace" font-size="12" fill="#000000" filter="url(#crisp)">
<text x="1277" y="26.5" xml:space="preserve">9,150</text>
<text x="1277" y="66.5" xml:space="preserve">9,130</text>
<text x="1277" y="106.5" xml:space="preserve">9,110</text>
<text x="1277" y="146.5" xml:space="preserve">9,090</text>
<text x="1277" y="186.5" xml:space="preserve">9,070</text>
<text x="1277" y="238.5" xml:space="preserve">185.00</text>
<text x="1277" y="275.5" xml:space="preserve">65.00</text>
<text x="1277" y="329.5" xml:space="preserve">7.50</text>
<text x="1277" y="366.5" xml:space="preserve">-4.00</text>
<text x="1277" y="419.5" xml:space="preserve">100.00</text>
<text x="1277" y="457.5" xml:space="preserve">35.00</text>
<text x="18" y="507.5" xml:space="preserve">02:40</text>
<text x="72" y="507.5" xml:space="preserve">09:20</text>
<text x="168" y="507.5" xml:space="preserve">10:40</text>
<text x="264" y="507.5" xml:space="preserve">12:00</text>
<text x="360" y="507.5" xml:space="preserve">13:20</text>
<text x="456" y="507.5" xml:space="preserve">14:40</text>
<text x="564" y="507.5" xml:space="preserve">17:20</text>
<text x="660" y="507.5" xml:space="preserve">18:40</text>
<text x="756" y="507.5" xml:space="preserve">20:00</text>
<text x="852" y="507.5" xml:space="preserve">21:20</text>
<text x="948" y="507.5" xml:space="preserve">22:40</text>
<text x="1044" y="507.5" xml:space="preserve">07/05</text>
<text x="1140" y="507.5" xml:space="preserve">01:20</text>
<text x="1236" y="507.5" xml:space="preserve">02:40</text>
</g>
<rect x="1272.5" y="289.5" width="39" height="14" fill="#ffffff" stroke="#000000"/>
<g font-family="IPAGothic, 'Liberation Mono', monospace" font-size="12" fill="#000000" filter="url(#crisp)">
<text x="1274" y="300" xml:space="preserve">× 100</text>
</g>
<rect x="1317" y="5" width="15" height="13" fill="#ffffff"/>
<rect x="1317" y="5" width="15" height="1" fill="#c0c0c0"/>
<rect x="1317" y="5" width="1" height="13" fill="#c0c0c0"/>
<rect x="1317" y="17" width="15" height="1" fill="#808080"/>
<rect x="1331" y="5" width="1" height="13" fill="#808080"/>
<polygon points="1319,9 1330,9 1324.5,15" fill="#808080"/>
<polyline points="1319.5,9.5 1329.5,9.5 1324.5,14.5 1319.5,9.5" fill="none" stroke="#000000"/>
<rect x="1317" y="217" width="15" height="13" fill="#ffffff"/>
<rect x="1317" y="217" width="15" height="1" fill="#c0c0c0"/>
<rect x="1317" y="217" width="1" height="13" fill="#c0c0c0"/>
<rect x="1317" y="229" width="15" height="1" fill="#808080"/>
<rect x="1331" y="217" width="1" height="13" fill="#808080"/>
<polygon points="1319,221 1330,221 1324.5,227" fill="#808080"/>
<polyline points="1319.5,221.5 1329.5,221.5 1324.5,226.5 1319.5,221.5" fill="none" stroke="#000000"/>
<rect x="1317" y="308" width="15" height="13" fill="#ffffff"/>
<rect x="1317" y="308" width="15" height="1" fill="#c0c0c0"/>
<rect x="1317" y="308" width="1" height="13" fill="#c0c0c0"/>
<rect x="1317" y="320" width="15" height="1" fill="#808080"/>
<rect x="1331" y="308" width="1" height="13" fill="#808080"/>
<polygon points="1319,312 1330,312 1324.5,318" fill="#808080"/>
<polyline points="1319.5,312.5 1329.5,312.5 1324.5,317.5 1319.5,312.5" fill="none" stroke="#000000"/>
<rect x="1317" y="399" width="15" height="13" fill="#ffffff"/>
<rect x="1317" y="399" width="15" height="1" fill="#c0c0c0"/>
<rect x="1317" y="399" width="1" height="13" fill="#c0c0c0"/>
<rect x="1317" y="411" width="15" height="1" fill="#808080"/>
<rect x="1331" y="399" width="1" height="13" fill="#808080"/>
<polygon points="1319,403 1330,403 1324.5,409" fill="#808080"/>
<polyline points="1319.5,403.5 1329.5,403.5 1324.5,408.5 1319.5,403.5" fill="none" stroke="#000000"/>
</svg>
</body></html>
